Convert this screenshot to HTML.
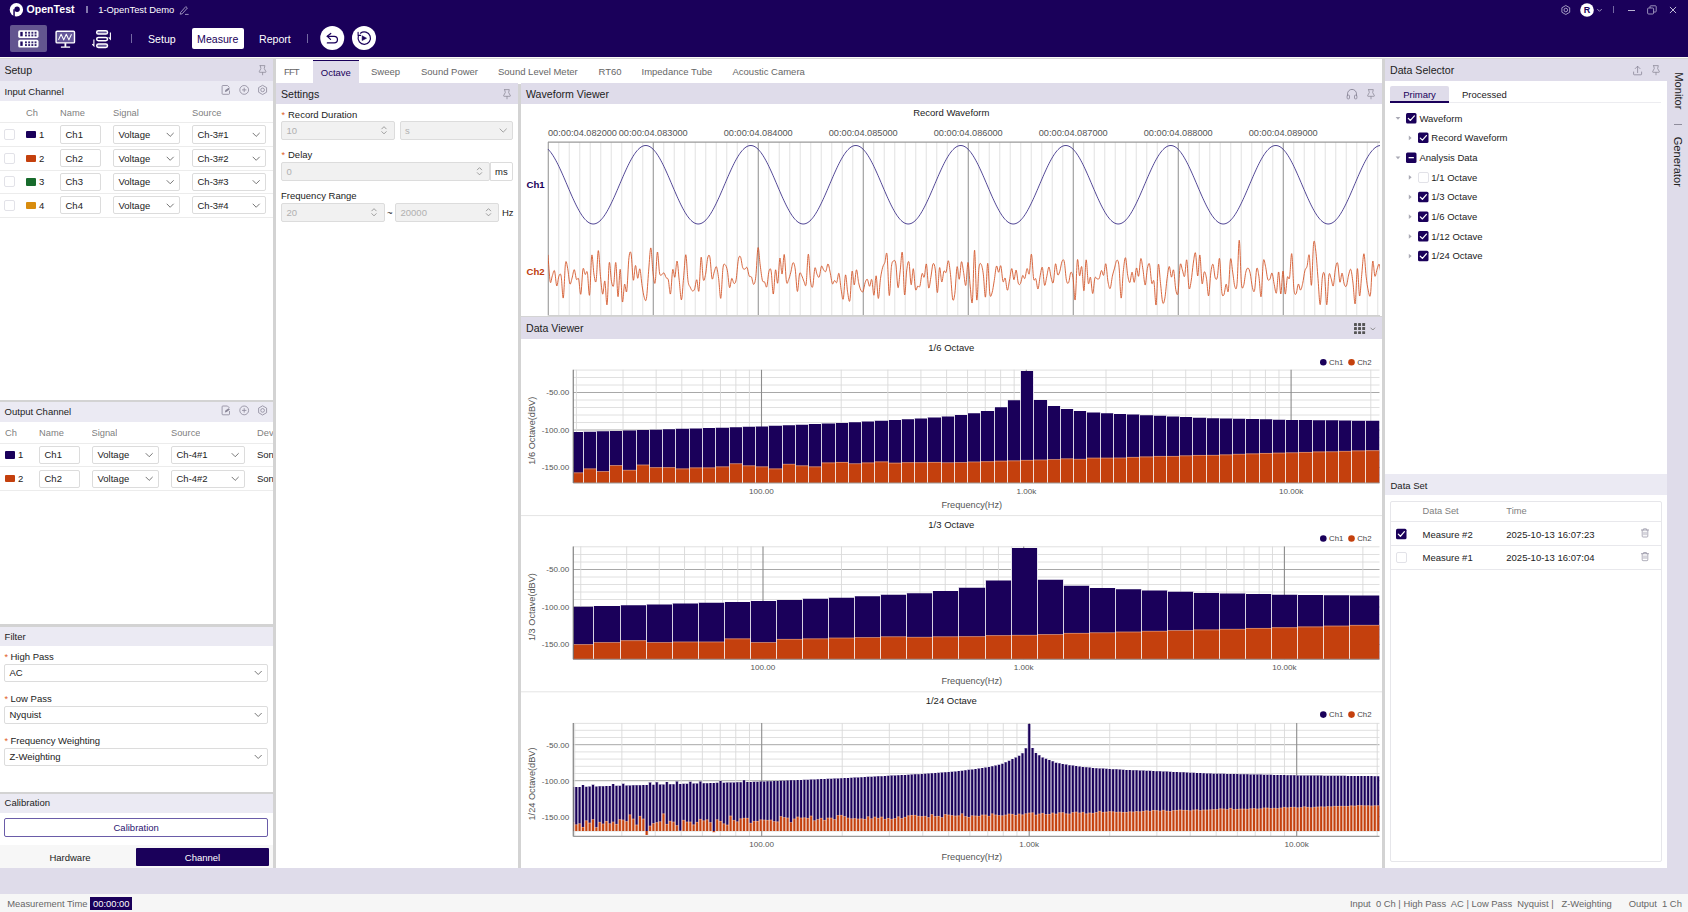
<!DOCTYPE html>
<html><head><meta charset="utf-8"><title>OpenTest</title>
<style>
html,body{margin:0;padding:0;}
body{width:1688px;height:912px;overflow:hidden;position:relative;background:#fff;font-family:"Liberation Sans",sans-serif;}
.a{position:absolute;display:block;}
.t{position:absolute;white-space:nowrap;display:block;}
svg text{font-family:"Liberation Sans",sans-serif;}
</style></head><body>
<div class="a " style="left:0px;top:0px;width:1688px;height:56.8px;background:#1a005a;"></div>
<div class="a " style="left:0px;top:56.8px;width:1688px;height:1.5px;background:#fbfbf6;"></div>
<div class="a " style="left:0px;top:58.3px;width:1688px;height:1px;background:#d6d6d6;"></div>
<div class="a " style="left:0px;top:868px;width:1688px;height:26px;background:#dfdcea;"></div>
<div class="a " style="left:0px;top:894px;width:1688px;height:18px;background:#f6f6f6;"></div>
<div class="a " style="left:273px;top:59px;width:3px;height:809px;background:#d3d3d3;"></div>
<div class="a " style="left:518px;top:83px;width:3px;height:785px;background:#d3d3d3;"></div>
<div class="a " style="left:1382px;top:59px;width:3px;height:809px;background:#d3d3d3;"></div>
<svg class="a" style="left:9px;top:2px;" width="16" height="16" viewBox="0 0 16 16"><circle cx="7.4" cy="7.7" r="6.7" fill="#fff"/><circle cx="8.1" cy="7.3" r="2.7" fill="#1a005a"/><rect x="4.3" y="7.3" width="1.5" height="7.4" fill="#1a005a"/></svg>
<span class="t" style="left:26.50px;top:2.40px;height:14.8px;line-height:14.8px;font-size:10.6px;color:#fff;font-weight:bold;">OpenTest</span>
<div class="a " style="left:86.4px;top:6.3px;width:1.4px;height:7.2px;background:#8378ad;"></div>
<span class="t" style="left:98.20px;top:3.40px;height:13.2px;line-height:13.2px;font-size:9.4px;color:#fff;">1-OpenTest Demo</span>
<svg class="a" style="left:178px;top:4px;" width="12" height="12" viewBox="0 0 12 12"><path d="M2.6 8.4 L7.8 2.6 L9.4 4 L4.2 9.8 L2.2 10.2 Z" fill="none" stroke="#b9b3d2" stroke-width="0.8" stroke-linejoin="round"/><path d="M7 10.4 H10.6" stroke="#b9b3d2" stroke-width="0.8"/></svg>
<svg class="a" style="left:1559px;top:4px;" width="13" height="12" viewBox="0 0 13 12"><g transform="translate(0.8 0)"><path d="M9.90 8.25 L6.00 10.50 L2.10 8.25 L2.10 3.75 L6.00 1.50 L9.90 3.75 Z" fill="none" stroke="#b9b3d2" stroke-width="0.85" stroke-linejoin="round"/><circle cx="6" cy="6" r="1.80" fill="none" stroke="#b9b3d2" stroke-width="0.85"/></g></svg>
<svg class="a" style="left:1579px;top:2px;" width="16" height="16" viewBox="0 0 16 16"><circle cx="8" cy="8" r="6.8" fill="#fff"/></svg>
<span class="t" style="left:1583.85px;top:3.80px;height:12.6px;line-height:12.6px;font-size:9px;color:#1a005a;font-weight:bold;">R</span>
<svg class="a" style="left:1594px;top:5px;" width="11" height="10" viewBox="0 0 11 10"><g transform="translate(0.5 0)"><path d="M3 4.3 L5 6.3 L7 4.3" fill="none" stroke="#b9b3d2" stroke-width="0.8" stroke-linecap="round" stroke-linejoin="round"/></g></svg>
<div class="a " style="left:1612.8px;top:6.3px;width:1.3px;height:7.2px;background:#7468a3;"></div>
<div class="a " style="left:1627.5px;top:9.6px;width:7px;height:0.9px;background:#b9b3d2;"></div>
<svg class="a" style="left:1646px;top:4px;" width="12" height="12" viewBox="0 0 12 12"><rect x="1.6" y="4" width="6" height="6" rx="1" fill="none" stroke="#b9b3d2" stroke-width="0.8"/><path d="M4 4 V2.6 Q4 1.8 4.8 1.8 H9.4 Q10.2 1.8 10.2 2.6 V7.2 Q10.2 8 9.4 8 H7.6" fill="none" stroke="#b9b3d2" stroke-width="0.8"/></svg>
<svg class="a" style="left:1667px;top:4px;" width="12" height="12" viewBox="0 0 12 12"><path d="M3.2 3.2 L8.8 8.8 M8.8 3.2 L3.2 8.8" stroke="#d5d0e6" stroke-width="0.9" stroke-linecap="round"/></svg>
<div class="a " style="left:10px;top:25.4px;width:37px;height:26.6px;background:#63558f;border-radius:2px;"></div>
<svg class="a" style="left:17px;top:29px;" width="23" height="21" viewBox="0 0 23 21"><g transform="translate(0.6 0.4)"><rect x="0.6" y="0.8" width="20.3" height="7.8" rx="1.7" fill="#fff"/><rect x="2.7" y="2.5" width="2.4" height="4.4" fill="#1f0a60"/><rect x="7.4" y="2.4" width="1.9" height="1.9" fill="#36256f"/><rect x="7.4" y="5.1" width="1.9" height="1.9" fill="#36256f"/><rect x="10.6" y="2.4" width="1.9" height="1.9" fill="#36256f"/><rect x="10.6" y="5.1" width="1.9" height="1.9" fill="#36256f"/><rect x="13.8" y="2.4" width="1.9" height="1.9" fill="#36256f"/><rect x="13.8" y="5.1" width="1.9" height="1.9" fill="#36256f"/><rect x="17.0" y="2.4" width="1.9" height="1.9" fill="#36256f"/><rect x="17.0" y="5.1" width="1.9" height="1.9" fill="#36256f"/><rect x="0.6" y="10.4" width="20.3" height="7.8" rx="1.7" fill="#fff"/><rect x="2.7" y="12.1" width="2.4" height="4.4" fill="#1f0a60"/><rect x="7.4" y="12.0" width="1.9" height="1.9" fill="#36256f"/><rect x="7.4" y="14.7" width="1.9" height="1.9" fill="#36256f"/><rect x="10.6" y="12.0" width="1.9" height="1.9" fill="#36256f"/><rect x="10.6" y="14.7" width="1.9" height="1.9" fill="#36256f"/><rect x="13.8" y="12.0" width="1.9" height="1.9" fill="#36256f"/><rect x="13.8" y="14.7" width="1.9" height="1.9" fill="#36256f"/><rect x="17.0" y="12.0" width="1.9" height="1.9" fill="#36256f"/><rect x="17.0" y="14.7" width="1.9" height="1.9" fill="#36256f"/></g></svg>
<svg class="a" style="left:54px;top:29px;" width="23" height="21" viewBox="0 0 23 21"><g transform="translate(0.5 0.5)"><rect x="1.6" y="1.8" width="18.4" height="11.6" rx="1" fill="#65579a" stroke="#fff" stroke-width="1.4"/><path d="M4 10.4 L6.6 4.8 L9.2 10.4 L11.8 4.8 L14.4 10.4 L17 4.8" fill="none" stroke="#fff" stroke-width="1.05" stroke-linejoin="round"/><path d="M10.9 13.6 V17.4" stroke="#fff" stroke-width="1.8"/><path d="M6.4 17.6 H15.6" stroke="#fff" stroke-width="1.3"/></g></svg>
<svg class="a" style="left:91px;top:29px;" width="22" height="21" viewBox="0 0 22 21"><rect x="5.7" y="1.7" width="10.8" height="3.3" rx="1.6" fill="#65579a" stroke="#fff" stroke-width="1.5"/><rect x="5.7" y="8.4" width="10.8" height="3.4" rx="1.7" fill="#1a005a" stroke="#fff" stroke-width="1.5"/><rect x="5.7" y="15.1" width="10.8" height="3.4" rx="1.7" fill="#65579a" stroke="#fff" stroke-width="1.5"/><path d="M19.4 3.4 V10.2 L17.7 8.4 M2.9 10.6 V16.8 L1.3 15.1" fill="none" stroke="#fff" stroke-width="1.1"/></svg>
<div class="a " style="left:131px;top:34px;width:1.3px;height:9px;background:#7468a3;"></div>
<span class="t" style="left:148.00px;top:31.60px;height:14.8px;line-height:14.8px;font-size:10.6px;color:#fff;">Setup</span>
<div class="a " style="left:192px;top:28px;width:51.5px;height:21.4px;background:#fff;border-radius:2px;"></div>
<span class="t" style="left:197.08px;top:31.60px;height:14.8px;line-height:14.8px;font-size:10.6px;color:#1a005a;">Measure</span>
<span class="t" style="left:259.00px;top:31.60px;height:14.8px;line-height:14.8px;font-size:10.6px;color:#fff;">Report</span>
<div class="a " style="left:307px;top:34px;width:1.3px;height:9px;background:#7468a3;"></div>
<svg class="a" style="left:319px;top:25px;" width="26" height="26" viewBox="0 0 26 26"><g transform="translate(0.75 0.4)"><circle cx="12.5" cy="12.5" r="12" fill="#fff"/><path d="M7.5 10.9 H14.4 A3.3 3.3 0 0 1 14.4 17.5 H7.6" fill="none" stroke="#1a005a" stroke-width="1.25" stroke-linecap="round"/><path d="M11 8 L7.5 10.9 L10.8 14" fill="none" stroke="#1a005a" stroke-width="1.25" stroke-linecap="round" stroke-linejoin="round"/></g></svg>
<svg class="a" style="left:351px;top:25px;" width="26" height="26" viewBox="0 0 26 26"><g transform="translate(0.5 0.4)"><circle cx="12.5" cy="12.5" r="12" fill="#fff"/><path d="M8.93 7.81 A6.2 6.2 0 1 1 6.79 10.99" fill="none" stroke="#1a005a" stroke-width="1.2" stroke-linecap="round"/><path d="M6.6 6.8 V10 H9.2" fill="none" stroke="#1a005a" stroke-width="1.1" stroke-linecap="round" stroke-linejoin="round"/><path d="M10.6 10.4 V15.2 L15.1 12.8 Z" fill="#1a005a" stroke="#1a005a" stroke-width="0.5" stroke-linejoin="round"/></g></svg>
<div class="a " style="left:0px;top:59px;width:273px;height:22px;background:#dfdcea;"></div>
<span class="t" style="left:4.40px;top:62.90px;height:14.8px;line-height:14.8px;font-size:10.6px;color:#222;">Setup</span>
<svg class="a" style="left:257px;top:64px;" width="11" height="12" viewBox="0 0 11 12"><g transform="translate(0.6 0)"><path d="M2.7 1.6 H7.3 Q5.5 4.6 8.3 7.5 Q8.7 8.2 8 8.3 H2 Q1.3 8.2 1.7 7.5 Q4.5 4.6 2.7 1.6 Z M5 8.4 V10.8" fill="none" stroke="#92909e" stroke-width="0.85" stroke-linejoin="round" stroke-linecap="round"/></g></svg>
<div class="a " style="left:0px;top:81px;width:273px;height:20px;background:#ebeaf3;"></div>
<span class="t" style="left:4.60px;top:84.65px;height:13.3px;line-height:13.3px;font-size:9.5px;color:#222;">Input Channel</span>
<svg class="a" style="left:220px;top:83px;" width="13" height="13" viewBox="0 0 13 13"><g transform="translate(0.3 0.9)"><path d="M7.2 1.6 H2.6 Q1.8 1.6 1.8 2.4 V9.6 Q1.8 10.4 2.6 10.4 H8.4 Q9.2 10.4 9.2 9.6 V6.6" fill="none" stroke="#8a8798" stroke-width="0.8"/><path d="M7.2 1.6 L9.2 3.6" stroke="#8a8798" stroke-width="0.8"/><path d="M4.6 8 L5 6 L8.4 3.8 L9.6 5 L6.4 7.6 Z" fill="#8a8798"/></g></svg>
<svg class="a" style="left:238px;top:83px;" width="13" height="13" viewBox="0 0 13 13"><g transform="translate(0.2 0.9)"><circle cx="6" cy="6" r="4.4" fill="none" stroke="#8a8798" stroke-width="0.8"/><path d="M6 3.8 V8.2 M3.8 6 H8.2" stroke="#8a8798" stroke-width="0.8"/></g></svg>
<svg class="a" style="left:256px;top:83px;" width="13" height="13" viewBox="0 0 13 13"><g transform="translate(0.6 0.9)"><path d="M9.98 8.30 L6.00 10.60 L2.02 8.30 L2.02 3.70 L6.00 1.40 L9.98 3.70 Z" fill="none" stroke="#8a8798" stroke-width="0.8" stroke-linejoin="round"/><circle cx="6" cy="6" r="1.84" fill="none" stroke="#8a8798" stroke-width="0.8"/></g></svg>
<span class="t" style="left:26.00px;top:107.20px;height:13.0px;line-height:13.0px;font-size:9.3px;color:#808080;">Ch</span>
<span class="t" style="left:60.00px;top:107.20px;height:13.0px;line-height:13.0px;font-size:9.3px;color:#808080;">Name</span>
<span class="t" style="left:113.00px;top:107.20px;height:13.0px;line-height:13.0px;font-size:9.3px;color:#808080;">Signal</span>
<span class="t" style="left:192.00px;top:107.20px;height:13.0px;line-height:13.0px;font-size:9.3px;color:#808080;">Source</span>
<div class="a " style="left:0px;top:122px;width:273px;height:1px;background:#ececec;"></div>
<div class="a " style="left:4.4px;top:128.9px;width:11px;height:11px;background:#fff;border:1px solid #e2e2e8;border-radius:2px;box-sizing:border-box;"></div>
<div class="a " style="left:26px;top:130.7px;width:10px;height:7.6px;background:#1a005a;border-radius:1px;"></div>
<span class="t" style="left:39.00px;top:128.05px;height:13.3px;line-height:13.3px;font-size:9.5px;color:#222;">1</span>
<div class="a " style="left:60px;top:125.4px;width:41px;height:18.2px;background:#fff;border:1px solid #dcdcdc;border-radius:2px;box-sizing:border-box;"></div>
<span class="t" style="left:65.50px;top:128.05px;height:13.3px;line-height:13.3px;font-size:9.5px;color:#222;">Ch1</span>
<div class="a " style="left:113px;top:125.4px;width:67px;height:18.2px;background:#fff;border:1px solid #dcdcdc;border-radius:2px;box-sizing:border-box;"></div>
<span class="t" style="left:118.50px;top:128.05px;height:13.3px;line-height:13.3px;font-size:9.5px;color:#222;">Voltage</span>
<svg class="a" style="left:165px;top:129px;" width="11" height="11" viewBox="0 0 11 11"><g transform="translate(0.2 0.5)"><path d="M1.7999999999999998 3.6999999999999997 L5 6.8999999999999995 L8.2 3.6999999999999997" fill="none" stroke="#666" stroke-width="0.9" stroke-linecap="round" stroke-linejoin="round"/></g></svg>
<div class="a " style="left:192px;top:125.4px;width:74px;height:18.2px;background:#fff;border:1px solid #dcdcdc;border-radius:2px;box-sizing:border-box;"></div>
<span class="t" style="left:197.50px;top:128.05px;height:13.3px;line-height:13.3px;font-size:9.5px;color:#222;">Ch-3#1</span>
<svg class="a" style="left:251px;top:129px;" width="11" height="11" viewBox="0 0 11 11"><g transform="translate(0.2 0.5)"><path d="M1.7999999999999998 3.6999999999999997 L5 6.8999999999999995 L8.2 3.6999999999999997" fill="none" stroke="#666" stroke-width="0.9" stroke-linecap="round" stroke-linejoin="round"/></g></svg>
<div class="a " style="left:0px;top:146.1px;width:273px;height:1px;background:#ececec;"></div>
<div class="a " style="left:4.4px;top:152.8px;width:11px;height:11px;background:#fff;border:1px solid #e2e2e8;border-radius:2px;box-sizing:border-box;"></div>
<div class="a " style="left:26px;top:154.6px;width:10px;height:7.6px;background:#c4400d;border-radius:1px;"></div>
<span class="t" style="left:39.00px;top:151.95px;height:13.3px;line-height:13.3px;font-size:9.5px;color:#222;">2</span>
<div class="a " style="left:60px;top:149.3px;width:41px;height:18.2px;background:#fff;border:1px solid #dcdcdc;border-radius:2px;box-sizing:border-box;"></div>
<span class="t" style="left:65.50px;top:151.95px;height:13.3px;line-height:13.3px;font-size:9.5px;color:#222;">Ch2</span>
<div class="a " style="left:113px;top:149.3px;width:67px;height:18.2px;background:#fff;border:1px solid #dcdcdc;border-radius:2px;box-sizing:border-box;"></div>
<span class="t" style="left:118.50px;top:151.95px;height:13.3px;line-height:13.3px;font-size:9.5px;color:#222;">Voltage</span>
<svg class="a" style="left:165px;top:153px;" width="11" height="11" viewBox="0 0 11 11"><g transform="translate(0.2 0.4)"><path d="M1.7999999999999998 3.6999999999999997 L5 6.8999999999999995 L8.2 3.6999999999999997" fill="none" stroke="#666" stroke-width="0.9" stroke-linecap="round" stroke-linejoin="round"/></g></svg>
<div class="a " style="left:192px;top:149.3px;width:74px;height:18.2px;background:#fff;border:1px solid #dcdcdc;border-radius:2px;box-sizing:border-box;"></div>
<span class="t" style="left:197.50px;top:151.95px;height:13.3px;line-height:13.3px;font-size:9.5px;color:#222;">Ch-3#2</span>
<svg class="a" style="left:251px;top:153px;" width="11" height="11" viewBox="0 0 11 11"><g transform="translate(0.2 0.4)"><path d="M1.7999999999999998 3.6999999999999997 L5 6.8999999999999995 L8.2 3.6999999999999997" fill="none" stroke="#666" stroke-width="0.9" stroke-linecap="round" stroke-linejoin="round"/></g></svg>
<div class="a " style="left:0px;top:170px;width:273px;height:1px;background:#ececec;"></div>
<div class="a " style="left:4.4px;top:176.25px;width:11px;height:11px;background:#fff;border:1px solid #e2e2e8;border-radius:2px;box-sizing:border-box;"></div>
<div class="a " style="left:26px;top:178.05px;width:10px;height:7.6px;background:#176b2c;border-radius:1px;"></div>
<span class="t" style="left:39.00px;top:175.40px;height:13.3px;line-height:13.3px;font-size:9.5px;color:#222;">3</span>
<div class="a " style="left:60px;top:172.75px;width:41px;height:18.2px;background:#fff;border:1px solid #dcdcdc;border-radius:2px;box-sizing:border-box;"></div>
<span class="t" style="left:65.50px;top:175.40px;height:13.3px;line-height:13.3px;font-size:9.5px;color:#222;">Ch3</span>
<div class="a " style="left:113px;top:172.75px;width:67px;height:18.2px;background:#fff;border:1px solid #dcdcdc;border-radius:2px;box-sizing:border-box;"></div>
<span class="t" style="left:118.50px;top:175.40px;height:13.3px;line-height:13.3px;font-size:9.5px;color:#222;">Voltage</span>
<svg class="a" style="left:165px;top:176px;" width="11" height="11" viewBox="0 0 11 11"><g transform="translate(0.2 0.85)"><path d="M1.7999999999999998 3.6999999999999997 L5 6.8999999999999995 L8.2 3.6999999999999997" fill="none" stroke="#666" stroke-width="0.9" stroke-linecap="round" stroke-linejoin="round"/></g></svg>
<div class="a " style="left:192px;top:172.75px;width:74px;height:18.2px;background:#fff;border:1px solid #dcdcdc;border-radius:2px;box-sizing:border-box;"></div>
<span class="t" style="left:197.50px;top:175.40px;height:13.3px;line-height:13.3px;font-size:9.5px;color:#222;">Ch-3#3</span>
<svg class="a" style="left:251px;top:176px;" width="11" height="11" viewBox="0 0 11 11"><g transform="translate(0.2 0.85)"><path d="M1.7999999999999998 3.6999999999999997 L5 6.8999999999999995 L8.2 3.6999999999999997" fill="none" stroke="#666" stroke-width="0.9" stroke-linecap="round" stroke-linejoin="round"/></g></svg>
<div class="a " style="left:0px;top:193.45px;width:273px;height:1px;background:#ececec;"></div>
<div class="a " style="left:4.4px;top:199.75px;width:11px;height:11px;background:#fff;border:1px solid #e2e2e8;border-radius:2px;box-sizing:border-box;"></div>
<div class="a " style="left:26px;top:201.55px;width:10px;height:7.6px;background:#d88c0e;border-radius:1px;"></div>
<span class="t" style="left:39.00px;top:198.90px;height:13.3px;line-height:13.3px;font-size:9.5px;color:#222;">4</span>
<div class="a " style="left:60px;top:196.25px;width:41px;height:18.2px;background:#fff;border:1px solid #dcdcdc;border-radius:2px;box-sizing:border-box;"></div>
<span class="t" style="left:65.50px;top:198.90px;height:13.3px;line-height:13.3px;font-size:9.5px;color:#222;">Ch4</span>
<div class="a " style="left:113px;top:196.25px;width:67px;height:18.2px;background:#fff;border:1px solid #dcdcdc;border-radius:2px;box-sizing:border-box;"></div>
<span class="t" style="left:118.50px;top:198.90px;height:13.3px;line-height:13.3px;font-size:9.5px;color:#222;">Voltage</span>
<svg class="a" style="left:165px;top:200px;" width="11" height="11" viewBox="0 0 11 11"><g transform="translate(0.2 0.35)"><path d="M1.7999999999999998 3.6999999999999997 L5 6.8999999999999995 L8.2 3.6999999999999997" fill="none" stroke="#666" stroke-width="0.9" stroke-linecap="round" stroke-linejoin="round"/></g></svg>
<div class="a " style="left:192px;top:196.25px;width:74px;height:18.2px;background:#fff;border:1px solid #dcdcdc;border-radius:2px;box-sizing:border-box;"></div>
<span class="t" style="left:197.50px;top:198.90px;height:13.3px;line-height:13.3px;font-size:9.5px;color:#222;">Ch-3#4</span>
<svg class="a" style="left:251px;top:200px;" width="11" height="11" viewBox="0 0 11 11"><g transform="translate(0.2 0.35)"><path d="M1.7999999999999998 3.6999999999999997 L5 6.8999999999999995 L8.2 3.6999999999999997" fill="none" stroke="#666" stroke-width="0.9" stroke-linecap="round" stroke-linejoin="round"/></g></svg>
<div class="a " style="left:0px;top:216.95px;width:273px;height:1px;background:#ececec;"></div>
<div class="a " style="left:0px;top:400px;width:273px;height:2px;background:#d3d3d3;"></div>
<div class="a " style="left:0px;top:402px;width:273px;height:20px;background:#ebeaf3;"></div>
<span class="t" style="left:4.60px;top:405.25px;height:13.3px;line-height:13.3px;font-size:9.5px;color:#222;">Output Channel</span>
<svg class="a" style="left:220px;top:404px;" width="13" height="13" viewBox="0 0 13 13"><g transform="translate(0.3 0.4)"><path d="M7.2 1.6 H2.6 Q1.8 1.6 1.8 2.4 V9.6 Q1.8 10.4 2.6 10.4 H8.4 Q9.2 10.4 9.2 9.6 V6.6" fill="none" stroke="#8a8798" stroke-width="0.8"/><path d="M7.2 1.6 L9.2 3.6" stroke="#8a8798" stroke-width="0.8"/><path d="M4.6 8 L5 6 L8.4 3.8 L9.6 5 L6.4 7.6 Z" fill="#8a8798"/></g></svg>
<svg class="a" style="left:238px;top:404px;" width="13" height="13" viewBox="0 0 13 13"><g transform="translate(0.2 0.4)"><circle cx="6" cy="6" r="4.4" fill="none" stroke="#8a8798" stroke-width="0.8"/><path d="M6 3.8 V8.2 M3.8 6 H8.2" stroke="#8a8798" stroke-width="0.8"/></g></svg>
<svg class="a" style="left:256px;top:404px;" width="13" height="13" viewBox="0 0 13 13"><g transform="translate(0.6 0.4)"><path d="M9.98 8.30 L6.00 10.60 L2.02 8.30 L2.02 3.70 L6.00 1.40 L9.98 3.70 Z" fill="none" stroke="#8a8798" stroke-width="0.8" stroke-linejoin="round"/><circle cx="6" cy="6" r="1.84" fill="none" stroke="#8a8798" stroke-width="0.8"/></g></svg>
<span class="t" style="left:5.00px;top:426.80px;height:13.0px;line-height:13.0px;font-size:9.3px;color:#808080;max-width:268px;overflow:hidden;">Ch</span>
<span class="t" style="left:39.00px;top:426.80px;height:13.0px;line-height:13.0px;font-size:9.3px;color:#808080;max-width:234px;overflow:hidden;">Name</span>
<span class="t" style="left:91.50px;top:426.80px;height:13.0px;line-height:13.0px;font-size:9.3px;color:#808080;max-width:181px;overflow:hidden;">Signal</span>
<span class="t" style="left:171.00px;top:426.80px;height:13.0px;line-height:13.0px;font-size:9.3px;color:#808080;max-width:102px;overflow:hidden;">Source</span>
<span class="t" style="left:257.00px;top:426.80px;height:13.0px;line-height:13.0px;font-size:9.3px;color:#808080;max-width:16px;overflow:hidden;">Dev</span>
<div class="a " style="left:0px;top:442.5px;width:273px;height:1px;background:#ececec;"></div>
<div class="a " style="left:5px;top:451.2px;width:10px;height:7.6px;background:#1a005a;border-radius:1px;"></div>
<span class="t" style="left:18.00px;top:448.45px;height:13.3px;line-height:13.3px;font-size:9.5px;color:#222;">1</span>
<div class="a " style="left:39px;top:445.8px;width:41px;height:18px;background:#fff;border:1px solid #dcdcdc;border-radius:2px;box-sizing:border-box;"></div>
<span class="t" style="left:44.50px;top:448.35px;height:13.3px;line-height:13.3px;font-size:9.5px;color:#222;">Ch1</span>
<div class="a " style="left:92px;top:445.8px;width:67px;height:18px;background:#fff;border:1px solid #dcdcdc;border-radius:2px;box-sizing:border-box;"></div>
<span class="t" style="left:97.50px;top:448.35px;height:13.3px;line-height:13.3px;font-size:9.5px;color:#222;">Voltage</span>
<svg class="a" style="left:144px;top:449px;" width="11" height="11" viewBox="0 0 11 11"><g transform="translate(0.2 0.8)"><path d="M1.7999999999999998 3.6999999999999997 L5 6.8999999999999995 L8.2 3.6999999999999997" fill="none" stroke="#666" stroke-width="0.9" stroke-linecap="round" stroke-linejoin="round"/></g></svg>
<div class="a " style="left:171px;top:445.8px;width:74px;height:18px;background:#fff;border:1px solid #dcdcdc;border-radius:2px;box-sizing:border-box;"></div>
<span class="t" style="left:176.50px;top:448.35px;height:13.3px;line-height:13.3px;font-size:9.5px;color:#222;">Ch-4#1</span>
<svg class="a" style="left:230px;top:449px;" width="11" height="11" viewBox="0 0 11 11"><g transform="translate(0.2 0.8)"><path d="M1.7999999999999998 3.6999999999999997 L5 6.8999999999999995 L8.2 3.6999999999999997" fill="none" stroke="#666" stroke-width="0.9" stroke-linecap="round" stroke-linejoin="round"/></g></svg>
<span class="t" style="left:257.00px;top:448.45px;height:13.3px;line-height:13.3px;font-size:9.5px;color:#222;width:16px;overflow:hidden;">Son</span>
<div class="a " style="left:0px;top:466.2px;width:273px;height:1px;background:#ececec;"></div>
<div class="a " style="left:5px;top:474.9px;width:10px;height:7.6px;background:#c4400d;border-radius:1px;"></div>
<span class="t" style="left:18.00px;top:472.15px;height:13.3px;line-height:13.3px;font-size:9.5px;color:#222;">2</span>
<div class="a " style="left:39px;top:469.5px;width:41px;height:18px;background:#fff;border:1px solid #dcdcdc;border-radius:2px;box-sizing:border-box;"></div>
<span class="t" style="left:44.50px;top:472.05px;height:13.3px;line-height:13.3px;font-size:9.5px;color:#222;">Ch2</span>
<div class="a " style="left:92px;top:469.5px;width:67px;height:18px;background:#fff;border:1px solid #dcdcdc;border-radius:2px;box-sizing:border-box;"></div>
<span class="t" style="left:97.50px;top:472.05px;height:13.3px;line-height:13.3px;font-size:9.5px;color:#222;">Voltage</span>
<svg class="a" style="left:144px;top:473px;" width="11" height="11" viewBox="0 0 11 11"><g transform="translate(0.2 0.5)"><path d="M1.7999999999999998 3.6999999999999997 L5 6.8999999999999995 L8.2 3.6999999999999997" fill="none" stroke="#666" stroke-width="0.9" stroke-linecap="round" stroke-linejoin="round"/></g></svg>
<div class="a " style="left:171px;top:469.5px;width:74px;height:18px;background:#fff;border:1px solid #dcdcdc;border-radius:2px;box-sizing:border-box;"></div>
<span class="t" style="left:176.50px;top:472.05px;height:13.3px;line-height:13.3px;font-size:9.5px;color:#222;">Ch-4#2</span>
<svg class="a" style="left:230px;top:473px;" width="11" height="11" viewBox="0 0 11 11"><g transform="translate(0.2 0.5)"><path d="M1.7999999999999998 3.6999999999999997 L5 6.8999999999999995 L8.2 3.6999999999999997" fill="none" stroke="#666" stroke-width="0.9" stroke-linecap="round" stroke-linejoin="round"/></g></svg>
<span class="t" style="left:257.00px;top:472.15px;height:13.3px;line-height:13.3px;font-size:9.5px;color:#222;width:16px;overflow:hidden;">Son</span>
<div class="a " style="left:0px;top:489.9px;width:273px;height:1px;background:#ececec;"></div>
<div class="a " style="left:0px;top:624px;width:273px;height:2.5px;background:#d3d3d3;"></div>
<div class="a " style="left:0px;top:626.5px;width:273px;height:19.7px;background:#ebeaf3;"></div>
<span class="t" style="left:4.60px;top:629.55px;height:13.3px;line-height:13.3px;font-size:9.5px;color:#222;">Filter</span>
<span class="t" style="left:4.60px;top:650.50px;height:12.6px;line-height:12.6px;font-size:9px;color:#e05a1e;">*</span>
<span class="t" style="left:10.50px;top:649.55px;height:13.3px;line-height:13.3px;font-size:9.5px;color:#222;">High Pass</span>
<div class="a " style="left:4px;top:663.6px;width:264px;height:18px;background:#fff;border:1px solid #dcdcdc;border-radius:2px;box-sizing:border-box;"></div>
<span class="t" style="left:9.50px;top:666.15px;height:13.3px;line-height:13.3px;font-size:9.5px;color:#222;">AC</span>
<svg class="a" style="left:253px;top:667px;" width="11" height="11" viewBox="0 0 11 11"><g transform="translate(0.2 0.6)"><path d="M1.7999999999999998 3.6999999999999997 L5 6.8999999999999995 L8.2 3.6999999999999997" fill="none" stroke="#666" stroke-width="0.9" stroke-linecap="round" stroke-linejoin="round"/></g></svg>
<span class="t" style="left:4.60px;top:692.50px;height:12.6px;line-height:12.6px;font-size:9px;color:#e05a1e;">*</span>
<span class="t" style="left:10.50px;top:691.55px;height:13.3px;line-height:13.3px;font-size:9.5px;color:#222;">Low Pass</span>
<div class="a " style="left:4px;top:705.6px;width:264px;height:18px;background:#fff;border:1px solid #dcdcdc;border-radius:2px;box-sizing:border-box;"></div>
<span class="t" style="left:9.50px;top:708.15px;height:13.3px;line-height:13.3px;font-size:9.5px;color:#222;">Nyquist</span>
<svg class="a" style="left:253px;top:709px;" width="11" height="11" viewBox="0 0 11 11"><g transform="translate(0.2 0.6)"><path d="M1.7999999999999998 3.6999999999999997 L5 6.8999999999999995 L8.2 3.6999999999999997" fill="none" stroke="#666" stroke-width="0.9" stroke-linecap="round" stroke-linejoin="round"/></g></svg>
<span class="t" style="left:4.60px;top:734.50px;height:12.6px;line-height:12.6px;font-size:9px;color:#e05a1e;">*</span>
<span class="t" style="left:10.50px;top:733.55px;height:13.3px;line-height:13.3px;font-size:9.5px;color:#222;">Frequency Weighting</span>
<div class="a " style="left:4px;top:747.6px;width:264px;height:18px;background:#fff;border:1px solid #dcdcdc;border-radius:2px;box-sizing:border-box;"></div>
<span class="t" style="left:9.50px;top:750.15px;height:13.3px;line-height:13.3px;font-size:9.5px;color:#222;">Z-Weighting</span>
<svg class="a" style="left:253px;top:751px;" width="11" height="11" viewBox="0 0 11 11"><g transform="translate(0.2 0.6)"><path d="M1.7999999999999998 3.6999999999999997 L5 6.8999999999999995 L8.2 3.6999999999999997" fill="none" stroke="#666" stroke-width="0.9" stroke-linecap="round" stroke-linejoin="round"/></g></svg>
<div class="a " style="left:0px;top:791.5px;width:273px;height:2px;background:#d3d3d3;"></div>
<div class="a " style="left:0px;top:793.5px;width:273px;height:19.5px;background:#ebeaf3;"></div>
<span class="t" style="left:4.60px;top:796.35px;height:13.3px;line-height:13.3px;font-size:9.5px;color:#222;">Calibration</span>
<div class="a " style="left:4px;top:818.4px;width:264px;height:18.6px;background:#fff;border:1px solid #6a5ca8;border-radius:2px;box-sizing:border-box;"></div>
<span class="t" style="left:113.49px;top:821.25px;height:13.3px;line-height:13.3px;font-size:9.5px;color:#2b1570;">Calibration</span>
<div class="a " style="left:0px;top:845px;width:273px;height:23px;background:#f7f7f7;"></div>
<span class="t" style="left:49.41px;top:850.55px;height:13.3px;line-height:13.3px;font-size:9.5px;color:#222;">Hardware</span>
<div class="a " style="left:136px;top:848px;width:133px;height:18.2px;background:#1a005a;border-radius:1px;"></div>
<span class="t" style="left:184.81px;top:850.55px;height:13.3px;line-height:13.3px;font-size:9.5px;color:#fff;">Channel</span>
<div class="a " style="left:276px;top:59px;width:1106px;height:25px;background:#fff;"></div>
<div class="a " style="left:313px;top:60px;width:45.5px;height:23.5px;background:#dfdcea;"></div>
<div class="a " style="left:313px;top:59.6px;width:45.5px;height:1.4px;background:#1a005a;"></div>
<span class="t" style="left:284.00px;top:65.15px;height:13.3px;line-height:13.3px;font-size:9.5px;color:#666;letter-spacing:-0.9px;">FFT</span>
<span class="t" style="left:320.75px;top:65.95px;height:13.3px;line-height:13.3px;font-size:9.5px;color:#1a005a;">Octave</span>
<span class="t" style="left:371.00px;top:65.15px;height:13.3px;line-height:13.3px;font-size:9.5px;color:#666;">Sweep</span>
<span class="t" style="left:421.00px;top:65.15px;height:13.3px;line-height:13.3px;font-size:9.5px;color:#666;">Sound Power</span>
<span class="t" style="left:498.00px;top:65.15px;height:13.3px;line-height:13.3px;font-size:9.5px;color:#666;">Sound Level Meter</span>
<span class="t" style="left:598.50px;top:65.15px;height:13.3px;line-height:13.3px;font-size:9.5px;color:#666;">RT60</span>
<span class="t" style="left:641.50px;top:65.15px;height:13.3px;line-height:13.3px;font-size:9.5px;color:#666;">Impedance Tube</span>
<span class="t" style="left:732.50px;top:65.15px;height:13.3px;line-height:13.3px;font-size:9.5px;color:#666;">Acoustic Camera</span>
<div class="a " style="left:276px;top:83px;width:242px;height:21px;background:#dfdcea;"></div>
<span class="t" style="left:281.00px;top:86.80px;height:14.8px;line-height:14.8px;font-size:10.6px;color:#222;">Settings</span>
<svg class="a" style="left:502px;top:88px;" width="10" height="12" viewBox="0 0 10 12"><path d="M2.7 1.6 H7.3 Q5.5 4.6 8.3 7.5 Q8.7 8.2 8 8.3 H2 Q1.3 8.2 1.7 7.5 Q4.5 4.6 2.7 1.6 Z M5 8.4 V10.8" fill="none" stroke="#92909e" stroke-width="0.85" stroke-linejoin="round" stroke-linecap="round"/></svg>
<span class="t" style="left:281.60px;top:108.50px;height:12.6px;line-height:12.6px;font-size:9px;color:#e05a1e;">*</span>
<span class="t" style="left:288.00px;top:107.55px;height:13.3px;line-height:13.3px;font-size:9.5px;color:#222;">Record Duration</span>
<div class="a " style="left:281px;top:121px;width:113.5px;height:18.5px;background:#f1f1f1;border:1px solid #dcdcdc;border-radius:2px;box-sizing:border-box;"></div>
<span class="t" style="left:286.50px;top:123.80px;height:13.3px;line-height:13.3px;font-size:9.5px;color:#b0b0b0;">10</span>
<svg class="a" style="left:380px;top:124px;" width="8" height="13" viewBox="0 0 8 13"><g transform="translate(0 0.25)"><path d="M1.8 4.6 L4 2.4 L6.2 4.6 M1.8 7.4 L4 9.6 L6.2 7.4" fill="none" stroke="#888" stroke-width="0.8" stroke-linecap="round" stroke-linejoin="round"/></g></svg>
<div class="a " style="left:399.5px;top:121px;width:113.5px;height:18.5px;background:#f1f1f1;border:1px solid #dcdcdc;border-radius:2px;box-sizing:border-box;"></div>
<span class="t" style="left:405.00px;top:123.80px;height:13.3px;line-height:13.3px;font-size:9.5px;color:#b0b0b0;">s</span>
<svg class="a" style="left:498px;top:125px;" width="11" height="11" viewBox="0 0 11 11"><g transform="translate(0.2 0.25)"><path d="M1.7999999999999998 3.6999999999999997 L5 6.8999999999999995 L8.2 3.6999999999999997" fill="none" stroke="#999" stroke-width="0.9" stroke-linecap="round" stroke-linejoin="round"/></g></svg>
<span class="t" style="left:281.60px;top:149.30px;height:12.6px;line-height:12.6px;font-size:9px;color:#e05a1e;">*</span>
<span class="t" style="left:288.00px;top:148.35px;height:13.3px;line-height:13.3px;font-size:9.5px;color:#222;">Delay</span>
<div class="a " style="left:281px;top:162px;width:209px;height:18.5px;background:#f1f1f1;border:1px solid #dcdcdc;border-radius:2px;box-sizing:border-box;"></div>
<span class="t" style="left:286.50px;top:164.80px;height:13.3px;line-height:13.3px;font-size:9.5px;color:#b0b0b0;">0</span>
<svg class="a" style="left:475px;top:165px;" width="9" height="13" viewBox="0 0 9 13"><g transform="translate(0.5 0.25)"><path d="M1.8 4.6 L4 2.4 L6.2 4.6 M1.8 7.4 L4 9.6 L6.2 7.4" fill="none" stroke="#888" stroke-width="0.8" stroke-linecap="round" stroke-linejoin="round"/></g></svg>
<div class="a " style="left:489.5px;top:162px;width:23.5px;height:18.5px;background:#fff;border:1px solid #dcdcdc;border-radius:0 2px 2px 0;box-sizing:border-box;"></div>
<span class="t" style="left:494.97px;top:164.75px;height:13.3px;line-height:13.3px;font-size:9.5px;color:#222;">ms</span>
<span class="t" style="left:281.00px;top:189.35px;height:13.3px;line-height:13.3px;font-size:9.5px;color:#222;">Frequency Range</span>
<div class="a " style="left:281px;top:203px;width:103.5px;height:18.5px;background:#f1f1f1;border:1px solid #dcdcdc;border-radius:2px;box-sizing:border-box;"></div>
<span class="t" style="left:286.50px;top:205.80px;height:13.3px;line-height:13.3px;font-size:9.5px;color:#b0b0b0;">20</span>
<svg class="a" style="left:370px;top:206px;" width="8" height="13" viewBox="0 0 8 13"><g transform="translate(0 0.25)"><path d="M1.8 4.6 L4 2.4 L6.2 4.6 M1.8 7.4 L4 9.6 L6.2 7.4" fill="none" stroke="#888" stroke-width="0.8" stroke-linecap="round" stroke-linejoin="round"/></g></svg>
<span class="t" style="left:387.03px;top:205.95px;height:13.3px;line-height:13.3px;font-size:9.5px;color:#222;">~</span>
<div class="a " style="left:395px;top:203px;width:104px;height:18.5px;background:#f1f1f1;border:1px solid #dcdcdc;border-radius:2px;box-sizing:border-box;"></div>
<span class="t" style="left:400.50px;top:205.80px;height:13.3px;line-height:13.3px;font-size:9.5px;color:#b0b0b0;">20000</span>
<svg class="a" style="left:484px;top:206px;" width="9" height="13" viewBox="0 0 9 13"><g transform="translate(0.5 0.25)"><path d="M1.8 4.6 L4 2.4 L6.2 4.6 M1.8 7.4 L4 9.6 L6.2 7.4" fill="none" stroke="#888" stroke-width="0.8" stroke-linecap="round" stroke-linejoin="round"/></g></svg>
<span class="t" style="left:502.00px;top:205.75px;height:13.3px;line-height:13.3px;font-size:9.5px;color:#222;">Hz</span>
<div class="a " style="left:1385px;top:59px;width:303px;height:22px;background:#dfdcea;"></div>
<div class="a " style="left:1667px;top:81px;width:21px;height:787px;background:#dfdcea;"></div>
<span class="t" style="left:1390.00px;top:62.90px;height:14.8px;line-height:14.8px;font-size:10.6px;color:#222;">Data Selector</span>
<svg class="a" style="left:1631px;top:64px;" width="13" height="13" viewBox="0 0 13 13"><g transform="translate(0.6 0.6)"><path d="M2 7.4 V9.6 Q2 10.2 2.6 10.2 H9.4 Q10 10.2 10 9.6 V7.4 M6 8 V1.8 M3.6 4 L6 1.6 L8.4 4" fill="none" stroke="#8a8798" stroke-width="0.8" stroke-linecap="round" stroke-linejoin="round"/></g></svg>
<svg class="a" style="left:1651px;top:64px;" width="10" height="12" viewBox="0 0 10 12"><path d="M2.7 1.6 H7.3 Q5.5 4.6 8.3 7.5 Q8.7 8.2 8 8.3 H2 Q1.3 8.2 1.7 7.5 Q4.5 4.6 2.7 1.6 Z M5 8.4 V10.8" fill="none" stroke="#92909e" stroke-width="0.85" stroke-linejoin="round" stroke-linecap="round"/></svg>
<div class="a " style="left:1390px;top:86px;width:59px;height:15.6px;background:#dfdcea;border-radius:2px 2px 0 0;"></div>
<div class="a " style="left:1390px;top:101.4px;width:59px;height:1.6px;background:#1a005a;"></div>
<div class="a " style="left:1449px;top:102px;width:212px;height:0.8px;background:#ececf0;"></div>
<span class="t" style="left:1403.14px;top:87.65px;height:13.3px;line-height:13.3px;font-size:9.5px;color:#1a005a;">Primary</span>
<span class="t" style="left:1462.00px;top:87.85px;height:13.3px;line-height:13.3px;font-size:9.5px;color:#222;">Processed</span>
<svg class="a" style="left:1394px;top:114px;" width="8" height="9" viewBox="0 0 8 9"><g transform="translate(0 0.2)"><path d="M1.6 2.8 H6.4 L4 5.6 Z" fill="#a9a9b4"/></g></svg>
<svg class="a" style="left:1406px;top:112px;" width="11" height="12" viewBox="0 0 11 12"><g transform="translate(0 0.9)"><rect x="0" y="0" width="10.5" height="10.5" rx="1.5" fill="#1a005a"/><path d="M2.31 5.46 L4.41 7.56 L8.40 2.94" fill="none" stroke="#fff" stroke-width="1.2" stroke-linecap="round" stroke-linejoin="round"/></g></svg>
<span class="t" style="left:1419.40px;top:111.55px;height:13.3px;line-height:13.3px;font-size:9.5px;color:#222;">Waveform</span>
<svg class="a" style="left:1406px;top:133px;" width="8" height="9" viewBox="0 0 8 9"><g transform="translate(0 0.9)"><path d="M2.8 1.6 V6.4 L5.6 4 Z" fill="#a9a9b4"/></g></svg>
<svg class="a" style="left:1418px;top:132px;" width="11" height="12" viewBox="0 0 11 12"><g transform="translate(0 0.6)"><rect x="0" y="0" width="10.5" height="10.5" rx="1.5" fill="#1a005a"/><path d="M2.31 5.46 L4.41 7.56 L8.40 2.94" fill="none" stroke="#fff" stroke-width="1.2" stroke-linecap="round" stroke-linejoin="round"/></g></svg>
<span class="t" style="left:1431.30px;top:131.25px;height:13.3px;line-height:13.3px;font-size:9.5px;color:#222;">Record Waveform</span>
<svg class="a" style="left:1394px;top:153px;" width="8" height="9" viewBox="0 0 8 9"><g transform="translate(0 0.7)"><path d="M1.6 2.8 H6.4 L4 5.6 Z" fill="#a9a9b4"/></g></svg>
<svg class="a" style="left:1406px;top:152px;" width="11" height="11" viewBox="0 0 11 11"><g transform="translate(0 0.4)"><rect x="0" y="0" width="10.5" height="10.5" rx="1.5" fill="#1a005a"/><path d="M2.62 5.25 H7.88" stroke="#fff" stroke-width="1.3"/></g></svg>
<span class="t" style="left:1419.40px;top:151.05px;height:13.3px;line-height:13.3px;font-size:9.5px;color:#222;">Analysis Data</span>
<svg class="a" style="left:1406px;top:173px;" width="8" height="9" viewBox="0 0 8 9"><g transform="translate(0 0.3)"><path d="M2.8 1.6 V6.4 L5.6 4 Z" fill="#a9a9b4"/></g></svg>
<div class="a " style="left:1418px;top:172px;width:10.5px;height:10.5px;background:#fff;border:1px solid #e2e2e8;border-radius:2px;box-sizing:border-box;"></div>
<span class="t" style="left:1431.30px;top:170.65px;height:13.3px;line-height:13.3px;font-size:9.5px;color:#222;">1/1 Octave</span>
<svg class="a" style="left:1406px;top:193px;" width="8" height="8" viewBox="0 0 8 8"><path d="M2.8 1.6 V6.4 L5.6 4 Z" fill="#a9a9b4"/></svg>
<svg class="a" style="left:1418px;top:191px;" width="11" height="12" viewBox="0 0 11 12"><g transform="translate(0 0.7)"><rect x="0" y="0" width="10.5" height="10.5" rx="1.5" fill="#1a005a"/><path d="M2.31 5.46 L4.41 7.56 L8.40 2.94" fill="none" stroke="#fff" stroke-width="1.2" stroke-linecap="round" stroke-linejoin="round"/></g></svg>
<span class="t" style="left:1431.30px;top:190.35px;height:13.3px;line-height:13.3px;font-size:9.5px;color:#222;">1/3 Octave</span>
<svg class="a" style="left:1406px;top:212px;" width="8" height="9" viewBox="0 0 8 9"><g transform="translate(0 0.7)"><path d="M2.8 1.6 V6.4 L5.6 4 Z" fill="#a9a9b4"/></g></svg>
<svg class="a" style="left:1418px;top:211px;" width="11" height="11" viewBox="0 0 11 11"><g transform="translate(0 0.4)"><rect x="0" y="0" width="10.5" height="10.5" rx="1.5" fill="#1a005a"/><path d="M2.31 5.46 L4.41 7.56 L8.40 2.94" fill="none" stroke="#fff" stroke-width="1.2" stroke-linecap="round" stroke-linejoin="round"/></g></svg>
<span class="t" style="left:1431.30px;top:210.05px;height:13.3px;line-height:13.3px;font-size:9.5px;color:#222;">1/6 Octave</span>
<svg class="a" style="left:1406px;top:232px;" width="8" height="9" viewBox="0 0 8 9"><g transform="translate(0 0.4)"><path d="M2.8 1.6 V6.4 L5.6 4 Z" fill="#a9a9b4"/></g></svg>
<svg class="a" style="left:1418px;top:231px;" width="11" height="11" viewBox="0 0 11 11"><g transform="translate(0 0.1)"><rect x="0" y="0" width="10.5" height="10.5" rx="1.5" fill="#1a005a"/><path d="M2.31 5.46 L4.41 7.56 L8.40 2.94" fill="none" stroke="#fff" stroke-width="1.2" stroke-linecap="round" stroke-linejoin="round"/></g></svg>
<span class="t" style="left:1431.30px;top:229.75px;height:13.3px;line-height:13.3px;font-size:9.5px;color:#222;">1/12 Octave</span>
<svg class="a" style="left:1406px;top:252px;" width="8" height="9" viewBox="0 0 8 9"><g transform="translate(0 0.1)"><path d="M2.8 1.6 V6.4 L5.6 4 Z" fill="#a9a9b4"/></g></svg>
<svg class="a" style="left:1418px;top:250px;" width="11" height="12" viewBox="0 0 11 12"><g transform="translate(0 0.8)"><rect x="0" y="0" width="10.5" height="10.5" rx="1.5" fill="#1a005a"/><path d="M2.31 5.46 L4.41 7.56 L8.40 2.94" fill="none" stroke="#fff" stroke-width="1.2" stroke-linecap="round" stroke-linejoin="round"/></g></svg>
<span class="t" style="left:1431.30px;top:249.45px;height:13.3px;line-height:13.3px;font-size:9.5px;color:#222;">1/24 Octave</span>
<div class="a " style="left:1385px;top:474px;width:282px;height:21px;background:#ebeaf3;"></div>
<span class="t" style="left:1390.50px;top:478.65px;height:13.3px;line-height:13.3px;font-size:9.5px;color:#222;">Data Set</span>
<div class="a " style="left:1390px;top:500.5px;width:271.5px;height:361.5px;background:#fff;border:1px solid #e6e6ea;border-radius:2px;box-sizing:border-box;"></div>
<span class="t" style="left:1422.50px;top:505.30px;height:13.0px;line-height:13.0px;font-size:9.3px;color:#808080;">Data Set</span>
<span class="t" style="left:1506.30px;top:505.30px;height:13.0px;line-height:13.0px;font-size:9.3px;color:#808080;">Time</span>
<div class="a " style="left:1390.5px;top:521.3px;width:270.5px;height:0.9px;background:#e8e8ec;"></div>
<svg class="a" style="left:1396px;top:528px;" width="11" height="12" viewBox="0 0 11 12"><g transform="translate(0 0.7)"><rect x="0" y="0" width="10.5" height="10.5" rx="1.5" fill="#1a005a"/><path d="M2.31 5.46 L4.41 7.56 L8.40 2.94" fill="none" stroke="#fff" stroke-width="1.2" stroke-linecap="round" stroke-linejoin="round"/></g></svg>
<span class="t" style="left:1422.50px;top:527.65px;height:13.3px;line-height:13.3px;font-size:9.5px;color:#222;">Measure #2</span>
<span class="t" style="left:1506.30px;top:527.65px;height:13.3px;line-height:13.3px;font-size:9.5px;color:#222;">2025-10-13 16:07:23</span>
<svg class="a" style="left:1639px;top:526px;" width="12" height="13" viewBox="0 0 12 13"><g transform="translate(0 0.6)"><path d="M2.4 3.4 H9.6 M4.6 3.4 V2.2 H7.4 V3.4 M3.2 3.4 V9.6 Q3.2 10.4 4 10.4 H8 Q8.8 10.4 8.8 9.6 V3.4 M5 5.6 V8.2 M7 5.6 V8.2" fill="none" stroke="#9a98a8" stroke-width="0.8" stroke-linecap="round"/></g></svg>
<div class="a " style="left:1390.5px;top:545.2px;width:270.5px;height:0.9px;background:#e8e8ec;"></div>
<div class="a " style="left:1396px;top:552.4px;width:10.5px;height:10.5px;background:#fff;border:1px solid #e2e2e8;border-radius:2px;box-sizing:border-box;"></div>
<span class="t" style="left:1422.50px;top:551.35px;height:13.3px;line-height:13.3px;font-size:9.5px;color:#222;">Measure #1</span>
<span class="t" style="left:1506.30px;top:551.35px;height:13.3px;line-height:13.3px;font-size:9.5px;color:#222;">2025-10-13 16:07:04</span>
<svg class="a" style="left:1639px;top:550px;" width="12" height="13" viewBox="0 0 12 13"><g transform="translate(0 0.3)"><path d="M2.4 3.4 H9.6 M4.6 3.4 V2.2 H7.4 V3.4 M3.2 3.4 V9.6 Q3.2 10.4 4 10.4 H8 Q8.8 10.4 8.8 9.6 V3.4 M5 5.6 V8.2 M7 5.6 V8.2" fill="none" stroke="#9a98a8" stroke-width="0.8" stroke-linecap="round"/></g></svg>
<div class="a " style="left:1390.5px;top:568.9px;width:270.5px;height:0.9px;background:#e8e8ec;"></div>
<span class="t" style="left:1658.83px;top:83.15px;height:15.7px;line-height:15.7px;font-size:11.2px;color:#222;transform:rotate(90deg);">Monitor</span>
<div class="a " style="left:1673.5px;top:123.6px;width:8px;height:1.3px;background:#8f8d9c;"></div>
<span class="t" style="left:1652.29px;top:154.15px;height:15.7px;line-height:15.7px;font-size:11.2px;color:#222;transform:rotate(90deg);">Generator</span>
<div class="a " style="left:521px;top:83px;width:861px;height:21px;background:#dfdcea;"></div>
<span class="t" style="left:526.00px;top:86.90px;height:14.8px;line-height:14.8px;font-size:10.6px;color:#222;">Waveform Viewer</span>
<svg class="a" style="left:1345px;top:87px;" width="14" height="14" viewBox="0 0 14 14"><g transform="translate(0.5 0.5)"><path d="M2 8.6 V6.4 A4.5 4.5 0 0 1 11 6.4 V8.6" fill="none" stroke="#8a8798" stroke-width="0.9"/><rect x="1.6" y="7.6" width="2.4" height="3.8" rx="0.9" fill="none" stroke="#8a8798" stroke-width="0.8"/><rect x="9" y="7.6" width="2.4" height="3.8" rx="0.9" fill="none" stroke="#8a8798" stroke-width="0.8"/></g></svg>
<svg class="a" style="left:1366px;top:88px;" width="10" height="12" viewBox="0 0 10 12"><path d="M2.7 1.6 H7.3 Q5.5 4.6 8.3 7.5 Q8.7 8.2 8 8.3 H2 Q1.3 8.2 1.7 7.5 Q4.5 4.6 2.7 1.6 Z M5 8.4 V10.8" fill="none" stroke="#92909e" stroke-width="0.85" stroke-linejoin="round" stroke-linecap="round"/></svg>
<div class="a " style="left:521px;top:316px;width:861px;height:1px;background:#d4d4d4;"></div>
<div class="a " style="left:521px;top:317px;width:861px;height:22px;background:#dfdcea;"></div>
<span class="t" style="left:526.00px;top:321.20px;height:14.8px;line-height:14.8px;font-size:10.6px;color:#222;">Data Viewer</span>
<svg class="a" style="left:1354px;top:323px;" width="12" height="12" viewBox="0 0 12 12"><rect x="0.0" y="0.0" width="2.9" height="2.9" rx="0.5" fill="#555"/><rect x="0.0" y="4.1" width="2.9" height="2.9" rx="0.5" fill="#555"/><rect x="0.0" y="8.2" width="2.9" height="2.9" rx="0.5" fill="#555"/><rect x="4.1" y="0.0" width="2.9" height="2.9" rx="0.5" fill="#555"/><rect x="4.1" y="4.1" width="2.9" height="2.9" rx="0.5" fill="#555"/><rect x="4.1" y="8.2" width="2.9" height="2.9" rx="0.5" fill="#555"/><rect x="8.2" y="0.0" width="2.9" height="2.9" rx="0.5" fill="#555"/><rect x="8.2" y="4.1" width="2.9" height="2.9" rx="0.5" fill="#555"/><rect x="8.2" y="8.2" width="2.9" height="2.9" rx="0.5" fill="#555"/></svg>
<svg class="a" style="left:1367px;top:323px;" width="11" height="11" viewBox="0 0 11 11"><g transform="translate(0.8 0.7)"><path d="M3 4.3 L5 6.3 L7 4.3" fill="none" stroke="#777" stroke-width="0.8" stroke-linecap="round" stroke-linejoin="round"/></g></svg>
<svg class="a" style="left:521px;top:104px" width="861" height="764" viewBox="521 104 861 764"><text x="951.3" y="116.4" font-size="9.5" fill="#222" text-anchor="middle">Record Waveform</text><path d="M548.25 142.00 L548.25 315.50" stroke="#8f8f8f" stroke-width="1"/><path d="M558.75 142.00 L558.75 315.50" stroke="#dedede" stroke-width="0.9"/><path d="M569.25 142.00 L569.25 315.50" stroke="#dedede" stroke-width="0.9"/><path d="M579.75 142.00 L579.75 315.50" stroke="#dedede" stroke-width="0.9"/><path d="M590.25 142.00 L590.25 315.50" stroke="#dedede" stroke-width="0.9"/><path d="M600.75 142.00 L600.75 315.50" stroke="#dedede" stroke-width="0.9"/><path d="M611.25 142.00 L611.25 315.50" stroke="#dedede" stroke-width="0.9"/><path d="M621.75 142.00 L621.75 315.50" stroke="#dedede" stroke-width="0.9"/><path d="M632.25 142.00 L632.25 315.50" stroke="#dedede" stroke-width="0.9"/><path d="M642.75 142.00 L642.75 315.50" stroke="#dedede" stroke-width="0.9"/><path d="M653.25 142.00 L653.25 315.50" stroke="#8f8f8f" stroke-width="1"/><path d="M663.75 142.00 L663.75 315.50" stroke="#dedede" stroke-width="0.9"/><path d="M674.25 142.00 L674.25 315.50" stroke="#dedede" stroke-width="0.9"/><path d="M684.75 142.00 L684.75 315.50" stroke="#dedede" stroke-width="0.9"/><path d="M695.25 142.00 L695.25 315.50" stroke="#dedede" stroke-width="0.9"/><path d="M705.75 142.00 L705.75 315.50" stroke="#dedede" stroke-width="0.9"/><path d="M716.25 142.00 L716.25 315.50" stroke="#dedede" stroke-width="0.9"/><path d="M726.75 142.00 L726.75 315.50" stroke="#dedede" stroke-width="0.9"/><path d="M737.25 142.00 L737.25 315.50" stroke="#dedede" stroke-width="0.9"/><path d="M747.75 142.00 L747.75 315.50" stroke="#dedede" stroke-width="0.9"/><path d="M758.25 142.00 L758.25 315.50" stroke="#8f8f8f" stroke-width="1"/><path d="M768.75 142.00 L768.75 315.50" stroke="#dedede" stroke-width="0.9"/><path d="M779.25 142.00 L779.25 315.50" stroke="#dedede" stroke-width="0.9"/><path d="M789.75 142.00 L789.75 315.50" stroke="#dedede" stroke-width="0.9"/><path d="M800.25 142.00 L800.25 315.50" stroke="#dedede" stroke-width="0.9"/><path d="M810.75 142.00 L810.75 315.50" stroke="#dedede" stroke-width="0.9"/><path d="M821.25 142.00 L821.25 315.50" stroke="#dedede" stroke-width="0.9"/><path d="M831.75 142.00 L831.75 315.50" stroke="#dedede" stroke-width="0.9"/><path d="M842.25 142.00 L842.25 315.50" stroke="#dedede" stroke-width="0.9"/><path d="M852.75 142.00 L852.75 315.50" stroke="#dedede" stroke-width="0.9"/><path d="M863.25 142.00 L863.25 315.50" stroke="#8f8f8f" stroke-width="1"/><path d="M873.75 142.00 L873.75 315.50" stroke="#dedede" stroke-width="0.9"/><path d="M884.25 142.00 L884.25 315.50" stroke="#dedede" stroke-width="0.9"/><path d="M894.75 142.00 L894.75 315.50" stroke="#dedede" stroke-width="0.9"/><path d="M905.25 142.00 L905.25 315.50" stroke="#dedede" stroke-width="0.9"/><path d="M915.75 142.00 L915.75 315.50" stroke="#dedede" stroke-width="0.9"/><path d="M926.25 142.00 L926.25 315.50" stroke="#dedede" stroke-width="0.9"/><path d="M936.75 142.00 L936.75 315.50" stroke="#dedede" stroke-width="0.9"/><path d="M947.25 142.00 L947.25 315.50" stroke="#dedede" stroke-width="0.9"/><path d="M957.75 142.00 L957.75 315.50" stroke="#dedede" stroke-width="0.9"/><path d="M968.25 142.00 L968.25 315.50" stroke="#8f8f8f" stroke-width="1"/><path d="M978.75 142.00 L978.75 315.50" stroke="#dedede" stroke-width="0.9"/><path d="M989.25 142.00 L989.25 315.50" stroke="#dedede" stroke-width="0.9"/><path d="M999.75 142.00 L999.75 315.50" stroke="#dedede" stroke-width="0.9"/><path d="M1010.25 142.00 L1010.25 315.50" stroke="#dedede" stroke-width="0.9"/><path d="M1020.75 142.00 L1020.75 315.50" stroke="#dedede" stroke-width="0.9"/><path d="M1031.25 142.00 L1031.25 315.50" stroke="#dedede" stroke-width="0.9"/><path d="M1041.75 142.00 L1041.75 315.50" stroke="#dedede" stroke-width="0.9"/><path d="M1052.25 142.00 L1052.25 315.50" stroke="#dedede" stroke-width="0.9"/><path d="M1062.75 142.00 L1062.75 315.50" stroke="#dedede" stroke-width="0.9"/><path d="M1073.25 142.00 L1073.25 315.50" stroke="#8f8f8f" stroke-width="1"/><path d="M1083.75 142.00 L1083.75 315.50" stroke="#dedede" stroke-width="0.9"/><path d="M1094.25 142.00 L1094.25 315.50" stroke="#dedede" stroke-width="0.9"/><path d="M1104.75 142.00 L1104.75 315.50" stroke="#dedede" stroke-width="0.9"/><path d="M1115.25 142.00 L1115.25 315.50" stroke="#dedede" stroke-width="0.9"/><path d="M1125.75 142.00 L1125.75 315.50" stroke="#dedede" stroke-width="0.9"/><path d="M1136.25 142.00 L1136.25 315.50" stroke="#dedede" stroke-width="0.9"/><path d="M1146.75 142.00 L1146.75 315.50" stroke="#dedede" stroke-width="0.9"/><path d="M1157.25 142.00 L1157.25 315.50" stroke="#dedede" stroke-width="0.9"/><path d="M1167.75 142.00 L1167.75 315.50" stroke="#dedede" stroke-width="0.9"/><path d="M1178.25 142.00 L1178.25 315.50" stroke="#8f8f8f" stroke-width="1"/><path d="M1188.75 142.00 L1188.75 315.50" stroke="#dedede" stroke-width="0.9"/><path d="M1199.25 142.00 L1199.25 315.50" stroke="#dedede" stroke-width="0.9"/><path d="M1209.75 142.00 L1209.75 315.50" stroke="#dedede" stroke-width="0.9"/><path d="M1220.25 142.00 L1220.25 315.50" stroke="#dedede" stroke-width="0.9"/><path d="M1230.75 142.00 L1230.75 315.50" stroke="#dedede" stroke-width="0.9"/><path d="M1241.25 142.00 L1241.25 315.50" stroke="#dedede" stroke-width="0.9"/><path d="M1251.75 142.00 L1251.75 315.50" stroke="#dedede" stroke-width="0.9"/><path d="M1262.25 142.00 L1262.25 315.50" stroke="#dedede" stroke-width="0.9"/><path d="M1272.75 142.00 L1272.75 315.50" stroke="#dedede" stroke-width="0.9"/><path d="M1283.25 142.00 L1283.25 315.50" stroke="#8f8f8f" stroke-width="1"/><path d="M1293.75 142.00 L1293.75 315.50" stroke="#dedede" stroke-width="0.9"/><path d="M1304.25 142.00 L1304.25 315.50" stroke="#dedede" stroke-width="0.9"/><path d="M1314.75 142.00 L1314.75 315.50" stroke="#dedede" stroke-width="0.9"/><path d="M1325.25 142.00 L1325.25 315.50" stroke="#dedede" stroke-width="0.9"/><path d="M1335.75 142.00 L1335.75 315.50" stroke="#dedede" stroke-width="0.9"/><path d="M1346.25 142.00 L1346.25 315.50" stroke="#dedede" stroke-width="0.9"/><path d="M1356.75 142.00 L1356.75 315.50" stroke="#dedede" stroke-width="0.9"/><path d="M1367.25 142.00 L1367.25 315.50" stroke="#dedede" stroke-width="0.9"/><path d="M1377.75 142.00 L1377.75 315.50" stroke="#dedede" stroke-width="0.9"/><path d="M548.00 142.20 L1380.00 142.20" stroke="#9a9a9a" stroke-width="1.2"/><path d="M548.00 315.50 L1380.00 315.50" stroke="#d0d0d0" stroke-width="1"/><text x="548.00" y="136.20" font-size="9.2" fill="#555" text-anchor="start">00:00:04.082000</text><text x="653.25" y="136.20" font-size="9.2" fill="#555" text-anchor="middle">00:00:04.083000</text><text x="758.25" y="136.20" font-size="9.2" fill="#555" text-anchor="middle">00:00:04.084000</text><text x="863.25" y="136.20" font-size="9.2" fill="#555" text-anchor="middle">00:00:04.085000</text><text x="968.25" y="136.20" font-size="9.2" fill="#555" text-anchor="middle">00:00:04.086000</text><text x="1073.25" y="136.20" font-size="9.2" fill="#555" text-anchor="middle">00:00:04.087000</text><text x="1178.25" y="136.20" font-size="9.2" fill="#555" text-anchor="middle">00:00:04.088000</text><text x="1283.25" y="136.20" font-size="9.2" fill="#555" text-anchor="middle">00:00:04.089000</text><text x="526.50" y="188.20" font-size="9.6" fill="#1a005a" text-anchor="start" font-weight="bold">Ch1</text><text x="526.50" y="275.00" font-size="9.6" fill="#bd3a0c" text-anchor="start" font-weight="bold">Ch2</text><path d="M548.0 149.14 L549.0 150.19 L550.0 151.36 L551.0 152.65 L552.0 154.06 L553.0 155.58 L554.0 157.20 L555.0 158.93 L556.0 160.74 L557.0 162.64 L558.0 164.62 L559.0 166.67 L560.0 168.79 L561.0 170.96 L562.0 173.18 L563.0 175.44 L564.0 177.74 L565.0 180.06 L566.0 182.40 L567.0 184.75 L568.0 187.10 L569.0 189.44 L570.0 191.76 L571.0 194.06 L572.0 196.32 L573.0 198.54 L574.0 200.71 L575.0 202.83 L576.0 204.88 L577.0 206.86 L578.0 208.76 L579.0 210.57 L580.0 212.30 L581.0 213.92 L582.0 215.44 L583.0 216.85 L584.0 218.14 L585.0 219.31 L586.0 220.36 L587.0 221.29 L588.0 222.08 L589.0 222.74 L590.0 223.26 L591.0 223.64 L592.0 223.89 L593.0 224.00 L594.0 223.96 L595.0 223.78 L596.0 223.47 L597.0 223.02 L598.0 222.43 L599.0 221.70 L600.0 220.84 L601.0 219.85 L602.0 218.74 L603.0 217.51 L604.0 216.16 L605.0 214.69 L606.0 213.12 L607.0 211.45 L608.0 209.68 L609.0 207.82 L610.0 205.88 L611.0 203.86 L612.0 201.78 L613.0 199.63 L614.0 197.44 L615.0 195.19 L616.0 192.91 L617.0 190.60 L618.0 188.27 L619.0 185.92 L620.0 183.58 L621.0 181.23 L622.0 178.90 L623.0 176.59 L624.0 174.31 L625.0 172.06 L626.0 169.87 L627.0 167.72 L628.0 165.64 L629.0 163.62 L630.0 161.68 L631.0 159.82 L632.0 158.05 L633.0 156.38 L634.0 154.81 L635.0 153.34 L636.0 151.99 L637.0 150.76 L638.0 149.65 L639.0 148.66 L640.0 147.80 L641.0 147.07 L642.0 146.48 L643.0 146.03 L644.0 145.72 L645.0 145.54 L646.0 145.50 L647.0 145.61 L648.0 145.86 L649.0 146.24 L650.0 146.76 L651.0 147.42 L652.0 148.21 L653.0 149.14 L654.0 150.19 L655.0 151.36 L656.0 152.65 L657.0 154.06 L658.0 155.58 L659.0 157.20 L660.0 158.93 L661.0 160.74 L662.0 162.64 L663.0 164.62 L664.0 166.67 L665.0 168.79 L666.0 170.96 L667.0 173.18 L668.0 175.44 L669.0 177.74 L670.0 180.06 L671.0 182.40 L672.0 184.75 L673.0 187.10 L674.0 189.44 L675.0 191.76 L676.0 194.06 L677.0 196.32 L678.0 198.54 L679.0 200.71 L680.0 202.83 L681.0 204.88 L682.0 206.86 L683.0 208.76 L684.0 210.57 L685.0 212.30 L686.0 213.92 L687.0 215.44 L688.0 216.85 L689.0 218.14 L690.0 219.31 L691.0 220.36 L692.0 221.29 L693.0 222.08 L694.0 222.74 L695.0 223.26 L696.0 223.64 L697.0 223.89 L698.0 224.00 L699.0 223.96 L700.0 223.78 L701.0 223.47 L702.0 223.02 L703.0 222.43 L704.0 221.70 L705.0 220.84 L706.0 219.85 L707.0 218.74 L708.0 217.51 L709.0 216.16 L710.0 214.69 L711.0 213.12 L712.0 211.45 L713.0 209.68 L714.0 207.82 L715.0 205.88 L716.0 203.86 L717.0 201.78 L718.0 199.63 L719.0 197.44 L720.0 195.19 L721.0 192.91 L722.0 190.60 L723.0 188.27 L724.0 185.92 L725.0 183.58 L726.0 181.23 L727.0 178.90 L728.0 176.59 L729.0 174.31 L730.0 172.06 L731.0 169.87 L732.0 167.72 L733.0 165.64 L734.0 163.62 L735.0 161.68 L736.0 159.82 L737.0 158.05 L738.0 156.38 L739.0 154.81 L740.0 153.34 L741.0 151.99 L742.0 150.76 L743.0 149.65 L744.0 148.66 L745.0 147.80 L746.0 147.07 L747.0 146.48 L748.0 146.03 L749.0 145.72 L750.0 145.54 L751.0 145.50 L752.0 145.61 L753.0 145.86 L754.0 146.24 L755.0 146.76 L756.0 147.42 L757.0 148.21 L758.0 149.14 L759.0 150.19 L760.0 151.36 L761.0 152.65 L762.0 154.06 L763.0 155.58 L764.0 157.20 L765.0 158.93 L766.0 160.74 L767.0 162.64 L768.0 164.62 L769.0 166.67 L770.0 168.79 L771.0 170.96 L772.0 173.18 L773.0 175.44 L774.0 177.74 L775.0 180.06 L776.0 182.40 L777.0 184.75 L778.0 187.10 L779.0 189.44 L780.0 191.76 L781.0 194.06 L782.0 196.32 L783.0 198.54 L784.0 200.71 L785.0 202.83 L786.0 204.88 L787.0 206.86 L788.0 208.76 L789.0 210.57 L790.0 212.30 L791.0 213.92 L792.0 215.44 L793.0 216.85 L794.0 218.14 L795.0 219.31 L796.0 220.36 L797.0 221.29 L798.0 222.08 L799.0 222.74 L800.0 223.26 L801.0 223.64 L802.0 223.89 L803.0 224.00 L804.0 223.96 L805.0 223.78 L806.0 223.47 L807.0 223.02 L808.0 222.43 L809.0 221.70 L810.0 220.84 L811.0 219.85 L812.0 218.74 L813.0 217.51 L814.0 216.16 L815.0 214.69 L816.0 213.12 L817.0 211.45 L818.0 209.68 L819.0 207.82 L820.0 205.88 L821.0 203.86 L822.0 201.78 L823.0 199.63 L824.0 197.44 L825.0 195.19 L826.0 192.91 L827.0 190.60 L828.0 188.27 L829.0 185.92 L830.0 183.58 L831.0 181.23 L832.0 178.90 L833.0 176.59 L834.0 174.31 L835.0 172.06 L836.0 169.87 L837.0 167.72 L838.0 165.64 L839.0 163.62 L840.0 161.68 L841.0 159.82 L842.0 158.05 L843.0 156.38 L844.0 154.81 L845.0 153.34 L846.0 151.99 L847.0 150.76 L848.0 149.65 L849.0 148.66 L850.0 147.80 L851.0 147.07 L852.0 146.48 L853.0 146.03 L854.0 145.72 L855.0 145.54 L856.0 145.50 L857.0 145.61 L858.0 145.86 L859.0 146.24 L860.0 146.76 L861.0 147.42 L862.0 148.21 L863.0 149.14 L864.0 150.19 L865.0 151.36 L866.0 152.65 L867.0 154.06 L868.0 155.58 L869.0 157.20 L870.0 158.93 L871.0 160.74 L872.0 162.64 L873.0 164.62 L874.0 166.67 L875.0 168.79 L876.0 170.96 L877.0 173.18 L878.0 175.44 L879.0 177.74 L880.0 180.06 L881.0 182.40 L882.0 184.75 L883.0 187.10 L884.0 189.44 L885.0 191.76 L886.0 194.06 L887.0 196.32 L888.0 198.54 L889.0 200.71 L890.0 202.83 L891.0 204.88 L892.0 206.86 L893.0 208.76 L894.0 210.57 L895.0 212.30 L896.0 213.92 L897.0 215.44 L898.0 216.85 L899.0 218.14 L900.0 219.31 L901.0 220.36 L902.0 221.29 L903.0 222.08 L904.0 222.74 L905.0 223.26 L906.0 223.64 L907.0 223.89 L908.0 224.00 L909.0 223.96 L910.0 223.78 L911.0 223.47 L912.0 223.02 L913.0 222.43 L914.0 221.70 L915.0 220.84 L916.0 219.85 L917.0 218.74 L918.0 217.51 L919.0 216.16 L920.0 214.69 L921.0 213.12 L922.0 211.45 L923.0 209.68 L924.0 207.82 L925.0 205.88 L926.0 203.86 L927.0 201.78 L928.0 199.63 L929.0 197.44 L930.0 195.19 L931.0 192.91 L932.0 190.60 L933.0 188.27 L934.0 185.92 L935.0 183.58 L936.0 181.23 L937.0 178.90 L938.0 176.59 L939.0 174.31 L940.0 172.06 L941.0 169.87 L942.0 167.72 L943.0 165.64 L944.0 163.62 L945.0 161.68 L946.0 159.82 L947.0 158.05 L948.0 156.38 L949.0 154.81 L950.0 153.34 L951.0 151.99 L952.0 150.76 L953.0 149.65 L954.0 148.66 L955.0 147.80 L956.0 147.07 L957.0 146.48 L958.0 146.03 L959.0 145.72 L960.0 145.54 L961.0 145.50 L962.0 145.61 L963.0 145.86 L964.0 146.24 L965.0 146.76 L966.0 147.42 L967.0 148.21 L968.0 149.14 L969.0 150.19 L970.0 151.36 L971.0 152.65 L972.0 154.06 L973.0 155.58 L974.0 157.20 L975.0 158.93 L976.0 160.74 L977.0 162.64 L978.0 164.62 L979.0 166.67 L980.0 168.79 L981.0 170.96 L982.0 173.18 L983.0 175.44 L984.0 177.74 L985.0 180.06 L986.0 182.40 L987.0 184.75 L988.0 187.10 L989.0 189.44 L990.0 191.76 L991.0 194.06 L992.0 196.32 L993.0 198.54 L994.0 200.71 L995.0 202.83 L996.0 204.88 L997.0 206.86 L998.0 208.76 L999.0 210.57 L1000.0 212.30 L1001.0 213.92 L1002.0 215.44 L1003.0 216.85 L1004.0 218.14 L1005.0 219.31 L1006.0 220.36 L1007.0 221.29 L1008.0 222.08 L1009.0 222.74 L1010.0 223.26 L1011.0 223.64 L1012.0 223.89 L1013.0 224.00 L1014.0 223.96 L1015.0 223.78 L1016.0 223.47 L1017.0 223.02 L1018.0 222.43 L1019.0 221.70 L1020.0 220.84 L1021.0 219.85 L1022.0 218.74 L1023.0 217.51 L1024.0 216.16 L1025.0 214.69 L1026.0 213.12 L1027.0 211.45 L1028.0 209.68 L1029.0 207.82 L1030.0 205.88 L1031.0 203.86 L1032.0 201.78 L1033.0 199.63 L1034.0 197.44 L1035.0 195.19 L1036.0 192.91 L1037.0 190.60 L1038.0 188.27 L1039.0 185.92 L1040.0 183.58 L1041.0 181.23 L1042.0 178.90 L1043.0 176.59 L1044.0 174.31 L1045.0 172.06 L1046.0 169.87 L1047.0 167.72 L1048.0 165.64 L1049.0 163.62 L1050.0 161.68 L1051.0 159.82 L1052.0 158.05 L1053.0 156.38 L1054.0 154.81 L1055.0 153.34 L1056.0 151.99 L1057.0 150.76 L1058.0 149.65 L1059.0 148.66 L1060.0 147.80 L1061.0 147.07 L1062.0 146.48 L1063.0 146.03 L1064.0 145.72 L1065.0 145.54 L1066.0 145.50 L1067.0 145.61 L1068.0 145.86 L1069.0 146.24 L1070.0 146.76 L1071.0 147.42 L1072.0 148.21 L1073.0 149.14 L1074.0 150.19 L1075.0 151.36 L1076.0 152.65 L1077.0 154.06 L1078.0 155.58 L1079.0 157.20 L1080.0 158.93 L1081.0 160.74 L1082.0 162.64 L1083.0 164.62 L1084.0 166.67 L1085.0 168.79 L1086.0 170.96 L1087.0 173.18 L1088.0 175.44 L1089.0 177.74 L1090.0 180.06 L1091.0 182.40 L1092.0 184.75 L1093.0 187.10 L1094.0 189.44 L1095.0 191.76 L1096.0 194.06 L1097.0 196.32 L1098.0 198.54 L1099.0 200.71 L1100.0 202.83 L1101.0 204.88 L1102.0 206.86 L1103.0 208.76 L1104.0 210.57 L1105.0 212.30 L1106.0 213.92 L1107.0 215.44 L1108.0 216.85 L1109.0 218.14 L1110.0 219.31 L1111.0 220.36 L1112.0 221.29 L1113.0 222.08 L1114.0 222.74 L1115.0 223.26 L1116.0 223.64 L1117.0 223.89 L1118.0 224.00 L1119.0 223.96 L1120.0 223.78 L1121.0 223.47 L1122.0 223.02 L1123.0 222.43 L1124.0 221.70 L1125.0 220.84 L1126.0 219.85 L1127.0 218.74 L1128.0 217.51 L1129.0 216.16 L1130.0 214.69 L1131.0 213.12 L1132.0 211.45 L1133.0 209.68 L1134.0 207.82 L1135.0 205.88 L1136.0 203.86 L1137.0 201.78 L1138.0 199.63 L1139.0 197.44 L1140.0 195.19 L1141.0 192.91 L1142.0 190.60 L1143.0 188.27 L1144.0 185.92 L1145.0 183.58 L1146.0 181.23 L1147.0 178.90 L1148.0 176.59 L1149.0 174.31 L1150.0 172.06 L1151.0 169.87 L1152.0 167.72 L1153.0 165.64 L1154.0 163.62 L1155.0 161.68 L1156.0 159.82 L1157.0 158.05 L1158.0 156.38 L1159.0 154.81 L1160.0 153.34 L1161.0 151.99 L1162.0 150.76 L1163.0 149.65 L1164.0 148.66 L1165.0 147.80 L1166.0 147.07 L1167.0 146.48 L1168.0 146.03 L1169.0 145.72 L1170.0 145.54 L1171.0 145.50 L1172.0 145.61 L1173.0 145.86 L1174.0 146.24 L1175.0 146.76 L1176.0 147.42 L1177.0 148.21 L1178.0 149.14 L1179.0 150.19 L1180.0 151.36 L1181.0 152.65 L1182.0 154.06 L1183.0 155.58 L1184.0 157.20 L1185.0 158.93 L1186.0 160.74 L1187.0 162.64 L1188.0 164.62 L1189.0 166.67 L1190.0 168.79 L1191.0 170.96 L1192.0 173.18 L1193.0 175.44 L1194.0 177.74 L1195.0 180.06 L1196.0 182.40 L1197.0 184.75 L1198.0 187.10 L1199.0 189.44 L1200.0 191.76 L1201.0 194.06 L1202.0 196.32 L1203.0 198.54 L1204.0 200.71 L1205.0 202.83 L1206.0 204.88 L1207.0 206.86 L1208.0 208.76 L1209.0 210.57 L1210.0 212.30 L1211.0 213.92 L1212.0 215.44 L1213.0 216.85 L1214.0 218.14 L1215.0 219.31 L1216.0 220.36 L1217.0 221.29 L1218.0 222.08 L1219.0 222.74 L1220.0 223.26 L1221.0 223.64 L1222.0 223.89 L1223.0 224.00 L1224.0 223.96 L1225.0 223.78 L1226.0 223.47 L1227.0 223.02 L1228.0 222.43 L1229.0 221.70 L1230.0 220.84 L1231.0 219.85 L1232.0 218.74 L1233.0 217.51 L1234.0 216.16 L1235.0 214.69 L1236.0 213.12 L1237.0 211.45 L1238.0 209.68 L1239.0 207.82 L1240.0 205.88 L1241.0 203.86 L1242.0 201.78 L1243.0 199.63 L1244.0 197.44 L1245.0 195.19 L1246.0 192.91 L1247.0 190.60 L1248.0 188.27 L1249.0 185.92 L1250.0 183.58 L1251.0 181.23 L1252.0 178.90 L1253.0 176.59 L1254.0 174.31 L1255.0 172.06 L1256.0 169.87 L1257.0 167.72 L1258.0 165.64 L1259.0 163.62 L1260.0 161.68 L1261.0 159.82 L1262.0 158.05 L1263.0 156.38 L1264.0 154.81 L1265.0 153.34 L1266.0 151.99 L1267.0 150.76 L1268.0 149.65 L1269.0 148.66 L1270.0 147.80 L1271.0 147.07 L1272.0 146.48 L1273.0 146.03 L1274.0 145.72 L1275.0 145.54 L1276.0 145.50 L1277.0 145.61 L1278.0 145.86 L1279.0 146.24 L1280.0 146.76 L1281.0 147.42 L1282.0 148.21 L1283.0 149.14 L1284.0 150.19 L1285.0 151.36 L1286.0 152.65 L1287.0 154.06 L1288.0 155.58 L1289.0 157.20 L1290.0 158.93 L1291.0 160.74 L1292.0 162.64 L1293.0 164.62 L1294.0 166.67 L1295.0 168.79 L1296.0 170.96 L1297.0 173.18 L1298.0 175.44 L1299.0 177.74 L1300.0 180.06 L1301.0 182.40 L1302.0 184.75 L1303.0 187.10 L1304.0 189.44 L1305.0 191.76 L1306.0 194.06 L1307.0 196.32 L1308.0 198.54 L1309.0 200.71 L1310.0 202.83 L1311.0 204.88 L1312.0 206.86 L1313.0 208.76 L1314.0 210.57 L1315.0 212.30 L1316.0 213.92 L1317.0 215.44 L1318.0 216.85 L1319.0 218.14 L1320.0 219.31 L1321.0 220.36 L1322.0 221.29 L1323.0 222.08 L1324.0 222.74 L1325.0 223.26 L1326.0 223.64 L1327.0 223.89 L1328.0 224.00 L1329.0 223.96 L1330.0 223.78 L1331.0 223.47 L1332.0 223.02 L1333.0 222.43 L1334.0 221.70 L1335.0 220.84 L1336.0 219.85 L1337.0 218.74 L1338.0 217.51 L1339.0 216.16 L1340.0 214.69 L1341.0 213.12 L1342.0 211.45 L1343.0 209.68 L1344.0 207.82 L1345.0 205.88 L1346.0 203.86 L1347.0 201.78 L1348.0 199.63 L1349.0 197.44 L1350.0 195.19 L1351.0 192.91 L1352.0 190.60 L1353.0 188.27 L1354.0 185.92 L1355.0 183.58 L1356.0 181.23 L1357.0 178.90 L1358.0 176.59 L1359.0 174.31 L1360.0 172.06 L1361.0 169.87 L1362.0 167.72 L1363.0 165.64 L1364.0 163.62 L1365.0 161.68 L1366.0 159.82 L1367.0 158.05 L1368.0 156.38 L1369.0 154.81 L1370.0 153.34 L1371.0 151.99 L1372.0 150.76 L1373.0 149.65 L1374.0 148.66 L1375.0 147.80 L1376.0 147.07 L1377.0 146.48 L1378.0 146.03 L1379.0 145.72 L1380.0 145.54" fill="none" stroke="#40338a" stroke-width="0.9" stroke-linejoin="round"/><clipPath id="wc"><rect x="548.0" y="142.0" width="832.0" height="173.5"/></clipPath><path d="M548.00 254.87 C548.36 259.36 549.46 278.37 550.19 281.82 C550.92 285.28 551.65 277.41 552.38 275.59 C553.10 273.77 553.83 269.19 554.56 270.91 C555.29 272.62 556.02 285.02 556.75 285.86 C557.48 286.71 558.21 277.62 558.94 275.97 C559.67 274.33 560.40 272.35 561.12 276.01 C561.85 279.67 562.58 300.06 563.31 297.93 C564.04 295.81 564.77 268.19 565.50 263.28 C566.23 258.37 566.96 265.07 567.69 268.49 C568.42 271.92 569.15 282.21 569.88 283.82 C570.60 285.43 571.33 280.50 572.06 278.14 C572.79 275.79 573.52 269.50 574.25 269.68 C574.98 269.87 575.71 277.71 576.44 279.27 C577.17 280.83 577.90 276.55 578.62 279.03 C579.35 281.52 580.08 295.83 580.81 294.17 C581.54 292.50 582.27 272.35 583.00 269.07 C583.73 265.78 584.46 273.87 585.19 274.45 C585.92 275.04 586.65 269.13 587.38 272.57 C588.10 276.01 588.83 297.95 589.56 295.08 C590.29 292.21 591.02 258.87 591.75 255.37 C592.48 251.86 593.21 269.83 593.94 274.07 C594.67 278.32 595.40 284.74 596.12 280.84 C596.85 276.93 597.58 251.35 598.31 250.64 C599.04 249.92 599.77 269.32 600.50 276.57 C601.23 283.82 601.96 293.38 602.69 294.13 C603.42 294.88 604.15 279.32 604.88 281.07 C605.60 282.81 606.33 307.63 607.06 304.60 C607.79 301.57 608.52 266.78 609.25 262.88 C609.98 258.98 610.71 277.47 611.44 281.21 C612.17 284.94 612.90 288.38 613.62 285.28 C614.35 282.18 615.08 260.70 615.81 262.59 C616.54 264.49 617.27 295.52 618.00 296.64 C618.73 297.76 619.46 268.45 620.19 269.31 C620.92 270.17 621.65 299.31 622.38 301.81 C623.10 304.30 623.83 286.07 624.56 284.28 C625.29 282.48 626.02 295.48 626.75 291.05 C627.48 286.63 628.21 263.91 628.94 257.73 C629.67 251.54 630.40 250.19 631.12 253.92 C631.85 257.66 632.58 278.19 633.31 280.12 C634.04 282.05 634.77 265.80 635.50 265.49 C636.23 265.18 636.96 277.68 637.69 278.25 C638.42 278.82 639.15 267.71 639.88 268.90 C640.60 270.09 641.33 280.67 642.06 285.41 C642.79 290.15 643.52 295.17 644.25 297.35 C644.98 299.54 645.71 302.90 646.44 298.54 C647.17 294.18 647.90 279.65 648.62 271.21 C649.35 262.77 650.08 247.67 650.81 247.91 C651.54 248.14 652.27 266.86 653.00 272.63 C653.73 278.41 654.46 285.98 655.19 282.56 C655.92 279.14 656.65 253.69 657.38 252.10 C658.10 250.51 658.83 269.26 659.56 273.03 C660.29 276.81 661.02 274.76 661.75 274.73 C662.48 274.70 663.21 272.36 663.94 272.84 C664.67 273.33 665.40 276.48 666.12 277.65 C666.85 278.83 667.58 277.15 668.31 279.87 C669.04 282.58 669.77 295.63 670.50 293.94 C671.23 292.25 671.96 272.52 672.69 269.73 C673.42 266.94 674.15 278.63 674.88 277.18 C675.60 275.74 676.33 260.52 677.06 261.09 C677.79 261.66 678.52 274.15 679.25 280.61 C679.98 287.07 680.71 300.39 681.44 299.83 C682.17 299.27 682.90 284.76 683.62 277.25 C684.35 269.73 685.08 254.16 685.81 254.76 C686.54 255.35 687.27 275.40 688.00 280.79 C688.73 286.19 689.46 285.44 690.19 287.12 C690.92 288.81 691.65 290.59 692.38 290.92 C693.10 291.25 693.83 290.99 694.56 289.13 C695.29 287.26 696.02 279.48 696.75 279.75 C697.48 280.02 698.21 294.50 698.94 290.75 C699.67 287.00 700.40 259.15 701.12 257.28 C701.85 255.41 702.58 276.64 703.31 279.53 C704.04 282.43 704.77 278.23 705.50 274.64 C706.23 271.06 706.96 260.93 707.69 258.02 C708.42 255.12 709.15 253.77 709.88 257.21 C710.60 260.65 711.33 276.22 712.06 278.66 C712.79 281.10 713.52 273.82 714.25 271.85 C714.98 269.88 715.71 265.72 716.44 266.81 C717.17 267.91 717.90 273.18 718.62 278.41 C719.35 283.65 720.08 299.99 720.81 298.23 C721.54 296.46 722.27 273.38 723.00 267.82 C723.73 262.25 724.46 264.32 725.19 264.82 C725.92 265.32 726.65 267.02 727.38 270.81 C728.10 274.59 728.83 286.27 729.56 287.54 C730.29 288.82 731.02 279.14 731.75 278.45 C732.48 277.76 733.21 283.17 733.94 283.38 C734.67 283.60 735.40 283.68 736.12 279.75 C736.85 275.81 737.58 263.60 738.31 259.79 C739.04 255.98 739.77 255.57 740.50 256.88 C741.23 258.19 741.96 265.59 742.69 267.63 C743.42 269.68 744.15 269.16 744.88 269.14 C745.60 269.13 746.33 266.37 747.06 267.54 C747.79 268.71 748.52 274.59 749.25 276.15 C749.98 277.72 750.71 275.57 751.44 276.95 C752.17 278.32 752.90 284.46 753.62 284.42 C754.35 284.38 755.08 282.81 755.81 276.70 C756.54 270.59 757.27 249.68 758.00 247.75 C758.73 245.82 759.46 259.72 760.19 265.14 C760.92 270.56 761.65 277.48 762.38 280.28 C763.10 283.07 763.83 280.81 764.56 281.90 C765.29 282.99 766.02 288.57 766.75 286.81 C767.48 285.04 768.21 273.94 768.94 271.32 C769.67 268.70 770.40 267.32 771.12 271.11 C771.85 274.89 772.58 294.24 773.31 294.04 C774.04 293.84 774.77 271.74 775.50 269.92 C776.23 268.10 776.96 285.08 777.69 283.12 C778.42 281.16 779.15 259.68 779.88 258.17 C780.60 256.65 781.33 274.65 782.06 274.04 C782.79 273.43 783.52 253.25 784.25 254.53 C784.98 255.81 785.71 277.55 786.44 281.73 C787.17 285.91 787.90 281.18 788.62 279.60 C789.35 278.02 790.08 275.05 790.81 272.25 C791.54 269.45 792.27 263.35 793.00 262.80 C793.73 262.25 794.46 264.16 795.19 268.93 C795.92 273.70 796.65 290.62 797.38 291.42 C798.10 292.22 798.83 276.33 799.56 273.71 C800.29 271.10 801.02 274.45 801.75 275.72 C802.48 277.00 803.21 279.97 803.94 281.36 C804.67 282.76 805.40 288.64 806.12 284.10 C806.85 279.57 807.58 254.69 808.31 254.16 C809.04 253.62 809.77 275.48 810.50 280.88 C811.23 286.28 811.96 288.71 812.69 286.57 C813.42 284.43 814.15 270.07 814.88 268.04 C815.60 266.00 816.33 272.88 817.06 274.37 C817.79 275.85 818.52 278.30 819.25 276.95 C819.98 275.59 820.71 267.41 821.44 266.23 C822.17 265.06 822.90 269.02 823.62 269.89 C824.35 270.77 825.08 272.46 825.81 271.47 C826.54 270.48 827.27 263.78 828.00 263.95 C828.73 264.11 829.46 269.16 830.19 272.45 C830.92 275.75 831.65 282.37 832.38 283.71 C833.10 285.06 833.83 280.73 834.56 280.53 C835.29 280.33 836.02 283.70 836.75 282.51 C837.48 281.32 838.21 272.22 838.94 273.38 C839.67 274.54 840.40 285.22 841.12 289.47 C841.85 293.73 842.58 301.33 843.31 298.91 C844.04 296.48 844.77 275.93 845.50 274.90 C846.23 273.86 846.96 288.46 847.69 292.71 C848.42 296.96 849.15 303.96 849.88 300.40 C850.60 296.84 851.33 273.92 852.06 271.33 C852.79 268.75 853.52 285.14 854.25 284.89 C854.98 284.63 855.71 270.17 856.44 269.80 C857.17 269.42 857.90 279.26 858.62 282.64 C859.35 286.01 860.08 288.54 860.81 290.02 C861.54 291.51 862.27 292.81 863.00 291.54 C863.73 290.28 864.46 284.46 865.19 282.44 C865.92 280.42 866.65 278.77 867.38 279.42 C868.10 280.06 868.83 286.28 869.56 286.29 C870.29 286.31 871.02 278.03 871.75 279.51 C872.48 281.00 873.21 295.82 873.94 295.20 C874.67 294.59 875.40 275.28 876.12 275.82 C876.85 276.36 877.58 297.99 878.31 298.42 C879.04 298.85 879.77 283.61 880.50 278.42 C881.23 273.23 881.96 269.96 882.69 267.28 C883.42 264.61 884.15 264.47 884.88 262.35 C885.60 260.23 886.33 249.05 887.06 254.57 C887.79 260.09 888.52 293.46 889.25 295.45 C889.98 297.44 890.71 272.27 891.44 266.52 C892.17 260.76 892.90 261.38 893.62 260.92 C894.35 260.46 895.08 259.29 895.81 263.74 C896.54 268.19 897.27 286.43 898.00 287.62 C898.73 288.80 899.46 276.66 900.19 270.85 C900.92 265.04 901.65 248.77 902.38 252.75 C903.10 256.73 903.83 291.83 904.56 294.72 C905.29 297.60 906.02 275.48 906.75 270.05 C907.48 264.61 908.21 259.65 908.94 262.10 C909.67 264.54 910.40 283.60 911.12 284.71 C911.85 285.81 912.58 267.93 913.31 268.71 C914.04 269.49 914.77 286.48 915.50 289.39 C916.23 292.29 916.96 286.68 917.69 286.15 C918.42 285.62 919.15 288.31 919.88 286.21 C920.60 284.12 921.33 275.11 922.06 273.60 C922.79 272.08 923.52 278.72 924.25 277.14 C924.98 275.55 925.71 262.30 926.44 264.07 C927.17 265.84 927.90 285.49 928.62 287.75 C929.35 290.01 930.08 281.60 930.81 277.64 C931.54 273.68 932.27 265.43 933.00 263.99 C933.73 262.54 934.46 264.23 935.19 268.99 C935.92 273.75 936.65 292.78 937.38 292.56 C938.10 292.34 938.83 269.45 939.56 267.68 C940.29 265.92 941.02 281.40 941.75 281.98 C942.48 282.56 943.21 272.81 943.94 271.18 C944.67 269.56 945.40 273.98 946.12 272.24 C946.85 270.50 947.58 260.37 948.31 260.76 C949.04 261.14 949.77 268.14 950.50 274.54 C951.23 280.95 951.96 296.08 952.69 299.17 C953.42 302.27 954.15 298.51 954.88 293.12 C955.60 287.74 956.33 269.18 957.06 266.86 C957.79 264.54 958.52 280.08 959.25 279.23 C959.98 278.38 960.71 262.88 961.44 261.78 C962.17 260.67 962.90 268.65 963.62 272.58 C964.35 276.51 965.08 287.05 965.81 285.36 C966.54 283.68 967.27 262.35 968.00 262.47 C968.73 262.59 969.46 279.56 970.19 286.09 C970.92 292.62 971.65 307.64 972.38 301.66 C973.10 295.68 973.83 250.50 974.56 250.20 C975.29 249.91 976.02 296.91 976.75 299.88 C977.48 302.86 978.21 273.98 978.94 268.04 C979.67 262.11 980.40 263.24 981.12 264.26 C981.85 265.28 982.58 268.70 983.31 274.16 C984.04 279.62 984.77 298.85 985.50 297.04 C986.23 295.23 986.96 263.82 987.69 263.31 C988.42 262.81 989.15 289.11 989.88 294.02 C990.60 298.93 991.33 295.05 992.06 292.80 C992.79 290.55 993.52 284.96 994.25 280.52 C994.98 276.08 995.71 267.52 996.44 266.14 C997.17 264.76 997.90 272.29 998.62 272.25 C999.35 272.20 1000.08 264.32 1000.81 265.87 C1001.54 267.41 1002.27 279.50 1003.00 281.55 C1003.73 283.59 1004.46 276.71 1005.19 278.15 C1005.92 279.60 1006.65 289.91 1007.38 290.21 C1008.10 290.52 1008.83 283.57 1009.56 279.96 C1010.29 276.36 1011.02 268.62 1011.75 268.59 C1012.48 268.55 1013.21 279.50 1013.94 279.75 C1014.67 279.99 1015.40 269.49 1016.12 270.06 C1016.85 270.63 1017.58 280.94 1018.31 283.17 C1019.04 285.39 1019.77 284.68 1020.50 283.40 C1021.23 282.13 1021.96 276.34 1022.69 275.51 C1023.42 274.68 1024.15 279.59 1024.88 278.44 C1025.60 277.28 1026.33 269.37 1027.06 268.60 C1027.79 267.82 1028.52 276.16 1029.25 273.77 C1029.98 271.38 1030.71 253.42 1031.44 254.25 C1032.17 255.07 1032.90 274.64 1033.62 278.74 C1034.35 282.84 1035.08 277.13 1035.81 278.84 C1036.54 280.55 1037.27 289.52 1038.00 289.00 C1038.73 288.48 1039.46 279.30 1040.19 275.72 C1040.92 272.13 1041.65 265.87 1042.38 267.46 C1043.10 269.05 1043.83 283.73 1044.56 285.25 C1045.29 286.78 1046.02 279.66 1046.75 276.62 C1047.48 273.58 1048.21 266.86 1048.94 267.02 C1049.67 267.18 1050.40 275.01 1051.12 277.59 C1051.85 280.16 1052.58 284.78 1053.31 282.49 C1054.04 280.20 1054.77 265.12 1055.50 263.84 C1056.23 262.55 1056.96 273.59 1057.69 274.79 C1058.42 275.99 1059.15 273.28 1059.88 271.04 C1060.60 268.80 1061.33 262.92 1062.06 261.36 C1062.79 259.80 1063.52 258.52 1064.25 261.68 C1064.98 264.85 1065.71 276.86 1066.44 280.34 C1067.17 283.82 1067.90 283.88 1068.62 282.57 C1069.35 281.25 1070.08 273.26 1070.81 272.45 C1071.54 271.63 1072.27 273.11 1073.00 277.66 C1073.73 282.21 1074.46 302.68 1075.19 299.75 C1075.92 296.81 1076.65 264.06 1077.38 260.06 C1078.10 256.06 1078.83 274.64 1079.56 275.76 C1080.29 276.88 1081.02 264.31 1081.75 266.80 C1082.48 269.28 1083.21 291.81 1083.94 290.66 C1084.67 289.51 1085.40 261.12 1086.12 259.90 C1086.85 258.68 1087.58 280.45 1088.31 283.35 C1089.04 286.26 1089.77 275.65 1090.50 277.35 C1091.23 279.04 1091.96 293.39 1092.69 293.52 C1093.42 293.64 1094.15 280.53 1094.88 278.09 C1095.60 275.65 1096.33 278.83 1097.06 278.87 C1097.79 278.91 1098.52 279.71 1099.25 278.32 C1099.98 276.92 1100.71 271.03 1101.44 270.52 C1102.17 270.01 1102.90 276.37 1103.62 275.25 C1104.35 274.13 1105.08 262.70 1105.81 263.80 C1106.54 264.90 1107.27 277.74 1108.00 281.85 C1108.73 285.96 1109.46 289.39 1110.19 288.45 C1110.92 287.51 1111.65 279.62 1112.38 276.24 C1113.10 272.85 1113.83 270.78 1114.56 268.15 C1115.29 265.51 1116.02 260.83 1116.75 260.44 C1117.48 260.06 1118.21 259.55 1118.94 265.83 C1119.67 272.10 1120.40 297.16 1121.12 298.07 C1121.85 298.98 1122.58 278.01 1123.31 271.29 C1124.04 264.57 1124.77 257.09 1125.50 257.75 C1126.23 258.40 1126.96 271.10 1127.69 275.22 C1128.42 279.34 1129.15 282.96 1129.88 282.45 C1130.60 281.94 1131.33 272.16 1132.06 272.14 C1132.79 272.11 1133.52 282.98 1134.25 282.29 C1134.98 281.60 1135.71 269.03 1136.44 268.01 C1137.17 266.99 1137.90 277.73 1138.62 276.16 C1139.35 274.59 1140.08 259.66 1140.81 258.59 C1141.54 257.52 1142.27 265.35 1143.00 269.76 C1143.73 274.17 1144.46 285.27 1145.19 285.05 C1145.92 284.83 1146.65 271.90 1147.38 268.44 C1148.10 264.98 1148.83 261.86 1149.56 264.30 C1150.29 266.74 1151.02 280.27 1151.75 283.11 C1152.48 285.94 1153.21 277.70 1153.94 281.32 C1154.67 284.94 1155.40 307.58 1156.12 304.81 C1156.85 302.05 1157.58 268.29 1158.31 264.71 C1159.04 261.13 1159.77 277.04 1160.50 283.35 C1161.23 289.65 1161.96 300.07 1162.69 302.53 C1163.42 304.99 1164.15 302.07 1164.88 298.11 C1165.60 294.15 1166.33 284.06 1167.06 278.79 C1167.79 273.52 1168.52 266.77 1169.25 266.49 C1169.98 266.21 1170.71 276.51 1171.44 277.11 C1172.17 277.72 1172.90 267.99 1173.62 270.10 C1174.35 272.21 1175.08 285.99 1175.81 289.77 C1176.54 293.55 1177.27 296.91 1178.00 292.77 C1178.73 288.63 1179.46 268.75 1180.19 264.93 C1180.92 261.11 1181.65 267.94 1182.38 269.85 C1183.10 271.76 1183.83 278.03 1184.56 276.38 C1185.29 274.74 1186.02 258.06 1186.75 259.97 C1187.48 261.89 1188.21 284.34 1188.94 287.89 C1189.67 291.44 1190.40 285.37 1191.12 281.25 C1191.85 277.13 1192.58 267.87 1193.31 263.17 C1194.04 258.47 1194.77 250.91 1195.50 253.03 C1196.23 255.15 1196.96 275.56 1197.69 275.89 C1198.42 276.22 1199.15 253.73 1199.88 255.01 C1200.60 256.28 1201.33 280.72 1202.06 283.53 C1202.79 286.34 1203.52 272.77 1204.25 271.88 C1204.98 270.99 1205.71 274.18 1206.44 278.17 C1207.17 282.17 1207.90 296.75 1208.62 295.85 C1209.35 294.95 1210.08 278.03 1210.81 272.78 C1211.54 267.52 1212.27 263.49 1213.00 264.34 C1213.73 265.19 1214.46 275.76 1215.19 277.85 C1215.92 279.94 1216.65 280.09 1217.38 276.88 C1218.10 273.67 1218.83 256.13 1219.56 258.59 C1220.29 261.05 1221.02 285.60 1221.75 291.62 C1222.48 297.64 1223.21 295.96 1223.94 294.72 C1224.67 293.48 1225.40 284.80 1226.12 284.18 C1226.85 283.55 1227.58 295.13 1228.31 290.96 C1229.04 286.79 1229.77 262.31 1230.50 259.17 C1231.23 256.03 1231.96 267.52 1232.69 272.13 C1233.42 276.73 1234.15 284.88 1234.88 286.80 C1235.60 288.73 1236.33 291.44 1237.06 283.68 C1237.79 275.92 1238.52 240.25 1239.25 240.24 C1239.98 240.23 1240.71 276.08 1241.44 283.63 C1242.17 291.17 1242.90 287.43 1243.62 285.53 C1244.35 283.62 1245.08 275.11 1245.81 272.20 C1246.54 269.28 1247.27 267.85 1248.00 268.02 C1248.73 268.19 1249.46 270.01 1250.19 273.23 C1250.92 276.45 1251.65 284.48 1252.38 287.36 C1253.10 290.23 1253.83 293.62 1254.56 290.49 C1255.29 287.35 1256.02 270.85 1256.75 268.55 C1257.48 266.25 1258.21 272.02 1258.94 276.68 C1259.67 281.34 1260.40 299.07 1261.12 296.52 C1261.85 293.97 1262.58 266.40 1263.31 261.36 C1264.04 256.33 1264.77 263.37 1265.50 266.31 C1266.23 269.25 1266.96 276.85 1267.69 279.01 C1268.42 281.17 1269.15 280.24 1269.88 279.25 C1270.60 278.27 1271.33 272.22 1272.06 273.11 C1272.79 274.00 1273.52 281.30 1274.25 284.59 C1274.98 287.88 1275.71 294.96 1276.44 292.85 C1277.17 290.75 1277.90 271.78 1278.62 271.97 C1279.35 272.16 1280.08 294.13 1280.81 293.99 C1281.54 293.85 1282.27 271.11 1283.00 271.12 C1283.73 271.12 1284.46 292.99 1285.19 294.02 C1285.92 295.04 1286.65 279.96 1287.38 277.24 C1288.10 274.52 1288.83 281.62 1289.56 277.70 C1290.29 273.78 1291.02 251.78 1291.75 253.72 C1292.48 255.65 1293.21 282.64 1293.94 289.30 C1294.67 295.97 1295.40 294.56 1296.12 293.69 C1296.85 292.82 1297.58 284.68 1298.31 284.08 C1299.04 283.47 1299.77 290.16 1300.50 290.05 C1301.23 289.93 1301.96 286.59 1302.69 283.37 C1303.42 280.15 1304.15 273.58 1304.88 270.74 C1305.60 267.90 1306.33 268.93 1307.06 266.35 C1307.79 263.77 1308.52 252.11 1309.25 255.26 C1309.98 258.40 1310.71 287.25 1311.44 285.21 C1312.17 283.17 1312.90 248.68 1313.62 243.02 C1314.35 237.35 1315.08 245.30 1315.81 251.22 C1316.54 257.14 1317.27 269.64 1318.00 278.54 C1318.73 287.45 1319.46 304.89 1320.19 304.64 C1320.92 304.39 1321.65 281.96 1322.38 277.04 C1323.10 272.11 1323.83 270.48 1324.56 275.09 C1325.29 279.71 1326.02 304.74 1326.75 304.74 C1327.48 304.74 1328.21 279.45 1328.94 275.08 C1329.67 270.70 1330.40 276.71 1331.12 278.50 C1331.85 280.29 1332.58 287.54 1333.31 285.82 C1334.04 284.10 1334.77 271.90 1335.50 268.17 C1336.23 264.44 1336.96 261.11 1337.69 263.43 C1338.42 265.75 1339.15 280.46 1339.88 282.08 C1340.60 283.69 1341.33 272.78 1342.06 273.13 C1342.79 273.48 1343.52 282.07 1344.25 284.18 C1344.98 286.30 1345.71 287.36 1346.44 285.83 C1347.17 284.30 1347.90 277.74 1348.62 275.01 C1349.35 272.28 1350.08 268.12 1350.81 269.46 C1351.54 270.80 1352.27 277.34 1353.00 283.04 C1353.73 288.74 1354.46 306.06 1355.19 303.67 C1355.92 301.28 1356.65 269.96 1357.38 268.68 C1358.10 267.39 1358.83 294.99 1359.56 295.96 C1360.29 296.92 1361.02 281.51 1361.75 274.48 C1362.48 267.44 1363.21 253.47 1363.94 253.76 C1364.67 254.05 1365.40 270.03 1366.12 276.21 C1366.85 282.40 1367.58 287.86 1368.31 290.87 C1369.04 293.88 1369.77 299.18 1370.50 294.26 C1371.23 289.35 1371.96 264.38 1372.69 261.37 C1373.42 258.36 1374.15 274.90 1374.88 276.21 C1375.60 277.53 1376.33 271.22 1377.06 269.25 C1377.79 267.29 1378.52 263.19 1379.25 264.42 C1379.98 265.65 1380.71 274.04 1381.44 276.61 C1382.17 279.19 1383.26 279.32 1383.62 279.86" fill="none" stroke="#d4572a" stroke-width="0.9" stroke-linejoin="round" clip-path="url(#wc)"/><text x="951.3" y="351.3" font-size="9.5" fill="#222" text-anchor="middle">1/6 Octave</text><circle cx="1323.3" cy="362.2" r="3.3" fill="#1a005a"/><circle cx="1351.5" cy="362.2" r="3.3" fill="#c4400d"/><text x="1329.00" y="365.00" font-size="7.8" fill="#444" text-anchor="start">Ch1</text><text x="1357.20" y="365.00" font-size="7.8" fill="#444" text-anchor="start">Ch2</text><path d="M573.25 377.50 L1379.50 377.50" stroke="#dcdcdc" stroke-width="0.9"/><path d="M573.25 385.00 L1379.50 385.00" stroke="#dcdcdc" stroke-width="0.9"/><path d="M573.25 392.50 L1379.50 392.50" stroke="#a8a8a8" stroke-width="1"/><path d="M573.25 400.00 L1379.50 400.00" stroke="#dcdcdc" stroke-width="0.9"/><path d="M573.25 407.50 L1379.50 407.50" stroke="#dcdcdc" stroke-width="0.9"/><path d="M573.25 415.00 L1379.50 415.00" stroke="#dcdcdc" stroke-width="0.9"/><path d="M573.25 422.50 L1379.50 422.50" stroke="#dcdcdc" stroke-width="0.9"/><path d="M573.25 430.00 L1379.50 430.00" stroke="#a8a8a8" stroke-width="1"/><path d="M573.25 437.50 L1379.50 437.50" stroke="#dcdcdc" stroke-width="0.9"/><path d="M573.25 445.00 L1379.50 445.00" stroke="#dcdcdc" stroke-width="0.9"/><path d="M573.25 452.50 L1379.50 452.50" stroke="#dcdcdc" stroke-width="0.9"/><path d="M573.25 460.00 L1379.50 460.00" stroke="#dcdcdc" stroke-width="0.9"/><path d="M573.25 467.50 L1379.50 467.50" stroke="#a8a8a8" stroke-width="1"/><path d="M573.25 475.00 L1379.50 475.00" stroke="#dcdcdc" stroke-width="0.9"/><path d="M573.25 370.10 L1379.50 370.10" stroke="#dcdcdc" stroke-width="0.9"/><path d="M576.41 369.80 L576.41 483.00" stroke="#d9d9d9" stroke-width="0.9"/><path d="M623.04 369.80 L623.04 483.00" stroke="#d9d9d9" stroke-width="0.9"/><path d="M656.13 369.80 L656.13 483.00" stroke="#d9d9d9" stroke-width="0.9"/><path d="M681.79 369.80 L681.79 483.00" stroke="#d9d9d9" stroke-width="0.9"/><path d="M702.75 369.80 L702.75 483.00" stroke="#d9d9d9" stroke-width="0.9"/><path d="M720.48 369.80 L720.48 483.00" stroke="#d9d9d9" stroke-width="0.9"/><path d="M735.84 369.80 L735.84 483.00" stroke="#d9d9d9" stroke-width="0.9"/><path d="M749.38 369.80 L749.38 483.00" stroke="#d9d9d9" stroke-width="0.9"/><path d="M761.50 369.80 L761.50 483.00" stroke="#8c8c8c" stroke-width="1.1"/><path d="M841.21 369.80 L841.21 483.00" stroke="#d9d9d9" stroke-width="0.9"/><path d="M887.84 369.80 L887.84 483.00" stroke="#d9d9d9" stroke-width="0.9"/><path d="M920.93 369.80 L920.93 483.00" stroke="#d9d9d9" stroke-width="0.9"/><path d="M946.59 369.80 L946.59 483.00" stroke="#d9d9d9" stroke-width="0.9"/><path d="M967.55 369.80 L967.55 483.00" stroke="#d9d9d9" stroke-width="0.9"/><path d="M985.28 369.80 L985.28 483.00" stroke="#d9d9d9" stroke-width="0.9"/><path d="M1000.64 369.80 L1000.64 483.00" stroke="#d9d9d9" stroke-width="0.9"/><path d="M1014.18 369.80 L1014.18 483.00" stroke="#d9d9d9" stroke-width="0.9"/><path d="M1026.30 369.80 L1026.30 483.00" stroke="#8c8c8c" stroke-width="1.1"/><path d="M1106.01 369.80 L1106.01 483.00" stroke="#d9d9d9" stroke-width="0.9"/><path d="M1152.64 369.80 L1152.64 483.00" stroke="#d9d9d9" stroke-width="0.9"/><path d="M1185.73 369.80 L1185.73 483.00" stroke="#d9d9d9" stroke-width="0.9"/><path d="M1211.39 369.80 L1211.39 483.00" stroke="#d9d9d9" stroke-width="0.9"/><path d="M1232.35 369.80 L1232.35 483.00" stroke="#d9d9d9" stroke-width="0.9"/><path d="M1250.08 369.80 L1250.08 483.00" stroke="#d9d9d9" stroke-width="0.9"/><path d="M1265.44 369.80 L1265.44 483.00" stroke="#d9d9d9" stroke-width="0.9"/><path d="M1278.98 369.80 L1278.98 483.00" stroke="#d9d9d9" stroke-width="0.9"/><path d="M1291.10 369.80 L1291.10 483.00" stroke="#8c8c8c" stroke-width="1.1"/><path d="M1370.81 369.80 L1370.81 483.00" stroke="#d9d9d9" stroke-width="0.9"/><clipPath id="c6"><rect x="573.25" y="369.3" width="806.25" height="119.19999999999999"/></clipPath><g clip-path="url(#c6)"><path d="M569.50 483.00 V432.05 H583.50 V483.00 Z M583.50 483.00 V431.73 H596.50 V483.00 Z M596.50 483.00 V431.32 H609.50 V483.00 Z M609.50 483.00 V430.91 H622.50 V483.00 Z M622.50 483.00 V430.50 H636.50 V483.00 Z M636.50 483.00 V430.09 H649.50 V483.00 Z M649.50 483.00 V429.68 H662.50 V483.00 Z M662.50 483.00 V429.27 H675.50 V483.00 Z M675.50 483.00 V428.86 H689.50 V483.00 Z M689.50 483.00 V428.46 H702.50 V483.00 Z M702.50 483.00 V428.05 H715.50 V483.00 Z M715.50 483.00 V427.64 H729.50 V483.00 Z M729.50 483.00 V427.23 H742.50 V483.00 Z M742.50 483.00 V426.82 H755.50 V483.00 Z M755.50 483.00 V426.39 H768.50 V483.00 Z M768.50 483.00 V425.84 H782.50 V483.00 Z M782.50 483.00 V425.27 H795.50 V483.00 Z M795.50 483.00 V424.69 H808.50 V483.00 Z M808.50 483.00 V424.12 H821.50 V483.00 Z M821.50 483.00 V423.54 H835.50 V483.00 Z M835.50 483.00 V422.95 H848.50 V483.00 Z M848.50 483.00 V422.23 H861.50 V483.00 Z M861.50 483.00 V421.48 H874.50 V483.00 Z M874.50 483.00 V420.73 H888.50 V483.00 Z M888.50 483.00 V419.98 H901.50 V483.00 Z M901.50 483.00 V419.23 H914.50 V483.00 Z M914.50 483.00 V418.45 H927.50 V483.00 Z M927.50 483.00 V417.48 H941.50 V483.00 Z M941.50 483.00 V416.42 H954.50 V483.00 Z M954.50 483.00 V415.03 H967.50 V483.00 Z M967.50 483.00 V413.17 H980.50 V483.00 Z M980.50 483.00 V410.91 H994.50 V483.00 Z M994.50 483.00 V407.13 H1007.50 V483.00 Z M1007.50 483.00 V400.22 H1020.50 V483.00 Z M1020.50 483.00 V370.97 H1033.50 V483.00 Z M1033.50 483.00 V399.96 H1047.50 V483.00 Z M1047.50 483.00 V406.06 H1060.50 V483.00 Z M1060.50 483.00 V409.12 H1073.50 V483.00 Z M1073.50 483.00 V411.06 H1086.50 V483.00 Z M1086.50 483.00 V412.42 H1100.50 V483.00 Z M1100.50 483.00 V413.26 H1113.50 V483.00 Z M1113.50 483.00 V414.04 H1126.50 V483.00 Z M1126.50 483.00 V414.62 H1139.50 V483.00 Z M1139.50 483.00 V415.22 H1153.50 V483.00 Z M1153.50 483.00 V415.85 H1166.50 V483.00 Z M1166.50 483.00 V416.47 H1179.50 V483.00 Z M1179.50 483.00 V417.09 H1192.50 V483.00 Z M1192.50 483.00 V417.71 H1206.50 V483.00 Z M1206.50 483.00 V418.19 H1219.50 V483.00 Z M1219.50 483.00 V418.48 H1232.50 V483.00 Z M1232.50 483.00 V418.78 H1245.50 V483.00 Z M1245.50 483.00 V419.07 H1259.50 V483.00 Z M1259.50 483.00 V419.37 H1272.50 V483.00 Z M1272.50 483.00 V419.66 H1285.50 V483.00 Z M1285.50 483.00 V419.93 H1298.50 V483.00 Z M1298.50 483.00 V420.08 H1312.50 V483.00 Z M1312.50 483.00 V420.22 H1325.50 V483.00 Z M1325.50 483.00 V420.36 H1338.50 V483.00 Z M1338.50 483.00 V420.49 H1351.50 V483.00 Z M1351.50 483.00 V420.63 H1365.50 V483.00 Z M1365.50 483.00 V420.76 H1379.50 V483.00 Z" fill="#1a005a"/><path d="M569.50 483.00 V472.50 H583.50 V483.00 Z M583.50 483.00 V468.59 H596.50 V483.00 Z M596.50 483.00 V471.20 H609.50 V483.00 Z M609.50 483.00 V465.20 H622.50 V483.00 Z M622.50 483.00 V469.90 H636.50 V483.00 Z M636.50 483.00 V464.68 H649.50 V483.00 Z M649.50 483.00 V467.29 H662.50 V483.00 Z M662.50 483.00 V467.29 H675.50 V483.00 Z M675.50 483.00 V468.59 H689.50 V483.00 Z M689.50 483.00 V467.55 H702.50 V483.00 Z M702.50 483.00 V467.55 H715.50 V483.00 Z M715.50 483.00 V466.51 H729.50 V483.00 Z M729.50 483.00 V463.38 H742.50 V483.00 Z M742.50 483.00 V465.46 H755.50 V483.00 Z M755.50 483.00 V466.51 H768.50 V483.00 Z M768.50 483.00 V468.59 H782.50 V483.00 Z M782.50 483.00 V463.90 H795.50 V483.00 Z M795.50 483.00 V465.46 H808.50 V483.00 Z M808.50 483.00 V466.51 H821.50 V483.00 Z M821.50 483.00 V462.60 H835.50 V483.00 Z M835.50 483.00 V462.08 H848.50 V483.00 Z M848.50 483.00 V463.38 H861.50 V483.00 Z M861.50 483.00 V462.60 H874.50 V483.00 Z M874.50 483.00 V461.55 H888.50 V483.00 Z M888.50 483.00 V462.86 H901.50 V483.00 Z M901.50 483.00 V462.34 H914.50 V483.00 Z M914.50 483.00 V462.34 H927.50 V483.00 Z M927.50 483.00 V462.08 H941.50 V483.00 Z M941.50 483.00 V462.38 H954.50 V483.00 Z M954.50 483.00 V462.17 H967.50 V483.00 Z M967.50 483.00 V461.63 H980.50 V483.00 Z M980.50 483.00 V461.35 H994.50 V483.00 Z M994.50 483.00 V460.85 H1007.50 V483.00 Z M1007.50 483.00 V460.54 H1020.50 V483.00 Z M1020.50 483.00 V460.00 H1033.50 V483.00 Z M1033.50 483.00 V459.63 H1047.50 V483.00 Z M1047.50 483.00 V459.18 H1060.50 V483.00 Z M1060.50 483.00 V458.50 H1073.50 V483.00 Z M1073.50 483.00 V458.92 H1086.50 V483.00 Z M1086.50 483.00 V457.81 H1100.50 V483.00 Z M1100.50 483.00 V457.81 H1113.50 V483.00 Z M1113.50 483.00 V457.65 H1126.50 V483.00 Z M1126.50 483.00 V457.04 H1139.50 V483.00 Z M1139.50 483.00 V456.61 H1153.50 V483.00 Z M1153.50 483.00 V456.05 H1166.50 V483.00 Z M1166.50 483.00 V456.06 H1179.50 V483.00 Z M1179.50 483.00 V455.46 H1192.50 V483.00 Z M1192.50 483.00 V455.10 H1206.50 V483.00 Z M1206.50 483.00 V454.99 H1219.50 V483.00 Z M1219.50 483.00 V454.53 H1232.50 V483.00 Z M1232.50 483.00 V453.91 H1245.50 V483.00 Z M1245.50 483.00 V453.53 H1259.50 V483.00 Z M1259.50 483.00 V453.11 H1272.50 V483.00 Z M1272.50 483.00 V452.80 H1285.50 V483.00 Z M1285.50 483.00 V452.44 H1298.50 V483.00 Z M1298.50 483.00 V452.10 H1312.50 V483.00 Z M1312.50 483.00 V451.62 H1325.50 V483.00 Z M1325.50 483.00 V451.43 H1338.50 V483.00 Z M1338.50 483.00 V450.99 H1351.50 V483.00 Z M1351.50 483.00 V450.57 H1365.50 V483.00 Z M1365.50 483.00 V450.34 H1379.50 V483.00 Z" fill="#c4400d"/><path d="M569.50 472.80 H583.50 M583.50 468.89 H596.50 M596.50 471.50 H609.50 M609.50 465.50 H622.50 M622.50 470.20 H636.50 M636.50 464.98 H649.50 M649.50 467.59 H662.50 M662.50 467.59 H675.50 M675.50 468.89 H689.50 M689.50 467.85 H702.50 M702.50 467.85 H715.50 M715.50 466.81 H729.50 M729.50 463.68 H742.50 M742.50 465.76 H755.50 M755.50 466.81 H768.50 M768.50 468.89 H782.50 M782.50 464.20 H795.50 M795.50 465.76 H808.50 M808.50 466.81 H821.50 M821.50 462.90 H835.50 M835.50 462.38 H848.50 M848.50 463.68 H861.50 M861.50 462.90 H874.50 M874.50 461.85 H888.50 M888.50 463.16 H901.50 M901.50 462.64 H914.50 M914.50 462.64 H927.50 M927.50 462.38 H941.50 M941.50 462.68 H954.50 M954.50 462.47 H967.50 M967.50 461.93 H980.50 M980.50 461.65 H994.50 M994.50 461.15 H1007.50 M1007.50 460.84 H1020.50 M1020.50 460.30 H1033.50 M1033.50 459.93 H1047.50 M1047.50 459.48 H1060.50 M1060.50 458.80 H1073.50 M1073.50 459.22 H1086.50 M1086.50 458.11 H1100.50 M1100.50 458.11 H1113.50 M1113.50 457.95 H1126.50 M1126.50 457.34 H1139.50 M1139.50 456.91 H1153.50 M1153.50 456.35 H1166.50 M1166.50 456.36 H1179.50 M1179.50 455.76 H1192.50 M1192.50 455.40 H1206.50 M1206.50 455.29 H1219.50 M1219.50 454.83 H1232.50 M1232.50 454.21 H1245.50 M1245.50 453.83 H1259.50 M1259.50 453.41 H1272.50 M1272.50 453.10 H1285.50 M1285.50 452.74 H1298.50 M1298.50 452.40 H1312.50 M1312.50 451.92 H1325.50 M1325.50 451.73 H1338.50 M1338.50 451.29 H1351.50 M1351.50 450.87 H1365.50 M1365.50 450.64 H1379.50" stroke="#fff" stroke-opacity="0.45" stroke-width="0.8" fill="none"/><path d="M583.50 483.00 V431.73 M596.50 483.00 V431.32 M609.50 483.00 V430.91 M622.50 483.00 V430.50 M636.50 483.00 V430.09 M649.50 483.00 V429.68 M662.50 483.00 V429.27 M675.50 483.00 V428.86 M689.50 483.00 V428.46 M702.50 483.00 V428.05 M715.50 483.00 V427.64 M729.50 483.00 V427.23 M742.50 483.00 V426.82 M755.50 483.00 V426.39 M768.50 483.00 V425.84 M782.50 483.00 V425.27 M795.50 483.00 V424.69 M808.50 483.00 V424.12 M821.50 483.00 V423.54 M835.50 483.00 V422.95 M848.50 483.00 V422.23 M861.50 483.00 V421.48 M874.50 483.00 V420.73 M888.50 483.00 V419.98 M901.50 483.00 V419.23 M914.50 483.00 V418.45 M927.50 483.00 V417.48 M941.50 483.00 V416.42 M954.50 483.00 V415.03 M967.50 483.00 V413.17 M980.50 483.00 V410.91 M994.50 483.00 V407.13 M1007.50 483.00 V400.22 M1020.50 483.00 V370.97 M1033.50 483.00 V370.97 M1047.50 483.00 V399.96 M1060.50 483.00 V406.06 M1073.50 483.00 V409.12 M1086.50 483.00 V411.06 M1100.50 483.00 V412.42 M1113.50 483.00 V413.26 M1126.50 483.00 V414.04 M1139.50 483.00 V414.62 M1153.50 483.00 V415.22 M1166.50 483.00 V415.85 M1179.50 483.00 V416.47 M1192.50 483.00 V417.09 M1206.50 483.00 V417.71 M1219.50 483.00 V418.19 M1232.50 483.00 V418.48 M1245.50 483.00 V418.78 M1259.50 483.00 V419.07 M1272.50 483.00 V419.37 M1285.50 483.00 V419.66 M1298.50 483.00 V419.93 M1312.50 483.00 V420.08 M1325.50 483.00 V420.22 M1338.50 483.00 V420.36 M1351.50 483.00 V420.49 M1365.50 483.00 V420.63" stroke="#fff" stroke-opacity="0.82" stroke-width="1.0" fill="none"/></g><path d="M573.25 369.80 L573.25 483.00" stroke="#777" stroke-width="1.1"/><path d="M573.25 483.00 L1379.50 483.00" stroke="#999" stroke-width="1.1"/><text x="569.30" y="395.40" font-size="8.1" fill="#555" text-anchor="end">-50.00</text><text x="569.30" y="432.90" font-size="8.1" fill="#555" text-anchor="end">-100.00</text><text x="569.30" y="470.40" font-size="8.1" fill="#555" text-anchor="end">-150.00</text><text x="761.50" y="494.20" font-size="8.1" fill="#555" text-anchor="middle">100.00</text><text x="1026.30" y="494.20" font-size="8.1" fill="#555" text-anchor="middle">1.00k</text><text x="1291.10" y="494.20" font-size="8.1" fill="#555" text-anchor="middle">10.00k</text><text x="971.80" y="507.60" font-size="9.2" fill="#555" text-anchor="middle">Frequency(Hz)</text><text x="0" y="0" font-size="9.2" fill="#555" text-anchor="middle" transform="translate(534.6 430.7) rotate(-90)">1/6 Octave(dBV)</text><path d="M521.00 515.60 L1382.00 515.60" stroke="#e4e4e4" stroke-width="1"/><text x="951.3" y="527.5" font-size="9.5" fill="#222" text-anchor="middle">1/3 Octave</text><circle cx="1323.3" cy="538.5" r="3.3" fill="#1a005a"/><circle cx="1351.5" cy="538.5" r="3.3" fill="#c4400d"/><text x="1329.00" y="541.30" font-size="7.8" fill="#444" text-anchor="start">Ch1</text><text x="1357.20" y="541.30" font-size="7.8" fill="#444" text-anchor="start">Ch2</text><path d="M573.25 554.50 L1379.50 554.50" stroke="#dcdcdc" stroke-width="0.9"/><path d="M573.25 562.00 L1379.50 562.00" stroke="#dcdcdc" stroke-width="0.9"/><path d="M573.25 569.50 L1379.50 569.50" stroke="#a8a8a8" stroke-width="1"/><path d="M573.25 577.00 L1379.50 577.00" stroke="#dcdcdc" stroke-width="0.9"/><path d="M573.25 584.50 L1379.50 584.50" stroke="#dcdcdc" stroke-width="0.9"/><path d="M573.25 592.00 L1379.50 592.00" stroke="#dcdcdc" stroke-width="0.9"/><path d="M573.25 599.50 L1379.50 599.50" stroke="#dcdcdc" stroke-width="0.9"/><path d="M573.25 607.00 L1379.50 607.00" stroke="#a8a8a8" stroke-width="1"/><path d="M573.25 614.50 L1379.50 614.50" stroke="#dcdcdc" stroke-width="0.9"/><path d="M573.25 622.00 L1379.50 622.00" stroke="#dcdcdc" stroke-width="0.9"/><path d="M573.25 629.50 L1379.50 629.50" stroke="#dcdcdc" stroke-width="0.9"/><path d="M573.25 637.00 L1379.50 637.00" stroke="#dcdcdc" stroke-width="0.9"/><path d="M573.25 644.50 L1379.50 644.50" stroke="#a8a8a8" stroke-width="1"/><path d="M573.25 652.00 L1379.50 652.00" stroke="#dcdcdc" stroke-width="0.9"/><path d="M573.25 546.80 L1379.50 546.80" stroke="#dcdcdc" stroke-width="0.9"/><path d="M580.78 546.50 L580.78 659.20" stroke="#d9d9d9" stroke-width="0.9"/><path d="M626.69 546.50 L626.69 659.20" stroke="#d9d9d9" stroke-width="0.9"/><path d="M659.26 546.50 L659.26 659.20" stroke="#d9d9d9" stroke-width="0.9"/><path d="M684.52 546.50 L684.52 659.20" stroke="#d9d9d9" stroke-width="0.9"/><path d="M705.16 546.50 L705.16 659.20" stroke="#d9d9d9" stroke-width="0.9"/><path d="M722.62 546.50 L722.62 659.20" stroke="#d9d9d9" stroke-width="0.9"/><path d="M737.74 546.50 L737.74 659.20" stroke="#d9d9d9" stroke-width="0.9"/><path d="M751.07 546.50 L751.07 659.20" stroke="#d9d9d9" stroke-width="0.9"/><path d="M763.00 546.50 L763.00 659.20" stroke="#8c8c8c" stroke-width="1.1"/><path d="M841.48 546.50 L841.48 659.20" stroke="#d9d9d9" stroke-width="0.9"/><path d="M887.39 546.50 L887.39 659.20" stroke="#d9d9d9" stroke-width="0.9"/><path d="M919.96 546.50 L919.96 659.20" stroke="#d9d9d9" stroke-width="0.9"/><path d="M945.22 546.50 L945.22 659.20" stroke="#d9d9d9" stroke-width="0.9"/><path d="M965.86 546.50 L965.86 659.20" stroke="#d9d9d9" stroke-width="0.9"/><path d="M983.32 546.50 L983.32 659.20" stroke="#d9d9d9" stroke-width="0.9"/><path d="M998.44 546.50 L998.44 659.20" stroke="#d9d9d9" stroke-width="0.9"/><path d="M1011.77 546.50 L1011.77 659.20" stroke="#d9d9d9" stroke-width="0.9"/><path d="M1023.70 546.50 L1023.70 659.20" stroke="#8c8c8c" stroke-width="1.1"/><path d="M1102.18 546.50 L1102.18 659.20" stroke="#d9d9d9" stroke-width="0.9"/><path d="M1148.09 546.50 L1148.09 659.20" stroke="#d9d9d9" stroke-width="0.9"/><path d="M1180.66 546.50 L1180.66 659.20" stroke="#d9d9d9" stroke-width="0.9"/><path d="M1205.92 546.50 L1205.92 659.20" stroke="#d9d9d9" stroke-width="0.9"/><path d="M1226.56 546.50 L1226.56 659.20" stroke="#d9d9d9" stroke-width="0.9"/><path d="M1244.02 546.50 L1244.02 659.20" stroke="#d9d9d9" stroke-width="0.9"/><path d="M1259.14 546.50 L1259.14 659.20" stroke="#d9d9d9" stroke-width="0.9"/><path d="M1272.47 546.50 L1272.47 659.20" stroke="#d9d9d9" stroke-width="0.9"/><path d="M1284.40 546.50 L1284.40 659.20" stroke="#8c8c8c" stroke-width="1.1"/><path d="M1362.88 546.50 L1362.88 659.20" stroke="#d9d9d9" stroke-width="0.9"/><clipPath id="c3"><rect x="573.25" y="546.0" width="806.25" height="118.70000000000005"/></clipPath><g clip-path="url(#c3)"><path d="M567.50 659.20 V606.75 H593.50 V659.20 Z M593.50 659.20 V606.06 H620.50 V659.20 Z M620.50 659.20 V605.24 H646.50 V659.20 Z M646.50 659.20 V604.42 H672.50 V659.20 Z M672.50 659.20 V603.60 H698.50 V659.20 Z M698.50 659.20 V602.78 H724.50 V659.20 Z M724.50 659.20 V601.96 H750.50 V659.20 Z M750.50 659.20 V601.11 H776.50 V659.20 Z M776.50 659.20 V600.00 H802.50 V659.20 Z M802.50 659.20 V598.85 H828.50 V659.20 Z M828.50 659.20 V597.65 H854.50 V659.20 Z M854.50 659.20 V596.20 H880.50 V659.20 Z M880.50 659.20 V594.70 H906.50 V659.20 Z M906.50 659.20 V593.13 H932.50 V659.20 Z M932.50 659.20 V591.07 H958.50 V659.20 Z M958.50 659.20 V587.74 H985.50 V659.20 Z M985.50 659.20 V580.42 H1011.50 V659.20 Z M1011.50 659.20 V547.97 H1037.50 V659.20 Z M1037.50 659.20 V579.79 H1063.50 V659.20 Z M1063.50 659.20 V585.63 H1089.50 V659.20 Z M1089.50 659.20 V587.99 H1115.50 V659.20 Z M1115.50 659.20 V589.36 H1141.50 V659.20 Z M1141.50 659.20 V590.57 H1167.50 V659.20 Z M1167.50 659.20 V591.81 H1193.50 V659.20 Z M1193.50 659.20 V592.90 H1219.50 V659.20 Z M1219.50 659.20 V593.52 H1245.50 V659.20 Z M1245.50 659.20 V594.10 H1271.50 V659.20 Z M1271.50 659.20 V594.65 H1297.50 V659.20 Z M1297.50 659.20 V594.96 H1323.50 V659.20 Z M1323.50 659.20 V595.24 H1349.50 V659.20 Z M1349.50 659.20 V595.49 H1379.50 V659.20 Z" fill="#1a005a"/><path d="M567.50 659.20 V644.25 H593.50 V659.20 Z M593.50 659.20 V642.17 H620.50 V659.20 Z M620.50 659.20 V640.34 H646.50 V659.20 Z M646.50 659.20 V642.17 H672.50 V659.20 Z M672.50 659.20 V641.65 H698.50 V659.20 Z M698.50 659.20 V641.65 H724.50 V659.20 Z M724.50 659.20 V638.52 H750.50 V659.20 Z M750.50 659.20 V642.17 H776.50 V659.20 Z M776.50 659.20 V639.04 H802.50 V659.20 Z M802.50 659.20 V638.52 H828.50 V659.20 Z M828.50 659.20 V637.74 H854.50 V659.20 Z M854.50 659.20 V637.22 H880.50 V659.20 Z M880.50 659.20 V636.43 H906.50 V659.20 Z M906.50 659.20 V636.96 H932.50 V659.20 Z M932.50 659.20 V636.43 H958.50 V659.20 Z M958.50 659.20 V636.30 H985.50 V659.20 Z M985.50 659.20 V635.25 H1011.50 V659.20 Z M1011.50 659.20 V634.97 H1037.50 V659.20 Z M1037.50 659.20 V634.22 H1063.50 V659.20 Z M1063.50 659.20 V633.03 H1089.50 V659.20 Z M1089.50 659.20 V632.41 H1115.50 V659.20 Z M1115.50 659.20 V631.72 H1141.50 V659.20 Z M1141.50 659.20 V630.91 H1167.50 V659.20 Z M1167.50 659.20 V630.17 H1193.50 V659.20 Z M1193.50 659.20 V629.60 H1219.50 V659.20 Z M1219.50 659.20 V628.94 H1245.50 V659.20 Z M1245.50 659.20 V628.12 H1271.50 V659.20 Z M1271.50 659.20 V627.36 H1297.50 V659.20 Z M1297.50 659.20 V626.62 H1323.50 V659.20 Z M1323.50 659.20 V625.76 H1349.50 V659.20 Z M1349.50 659.20 V624.99 H1379.50 V659.20 Z" fill="#c4400d"/><path d="M567.50 644.55 H593.50 M593.50 642.47 H620.50 M620.50 640.64 H646.50 M646.50 642.47 H672.50 M672.50 641.95 H698.50 M698.50 641.95 H724.50 M724.50 638.82 H750.50 M750.50 642.47 H776.50 M776.50 639.34 H802.50 M802.50 638.82 H828.50 M828.50 638.04 H854.50 M854.50 637.52 H880.50 M880.50 636.73 H906.50 M906.50 637.26 H932.50 M932.50 636.73 H958.50 M958.50 636.60 H985.50 M985.50 635.55 H1011.50 M1011.50 635.27 H1037.50 M1037.50 634.52 H1063.50 M1063.50 633.33 H1089.50 M1089.50 632.71 H1115.50 M1115.50 632.02 H1141.50 M1141.50 631.21 H1167.50 M1167.50 630.47 H1193.50 M1193.50 629.90 H1219.50 M1219.50 629.24 H1245.50 M1245.50 628.42 H1271.50 M1271.50 627.66 H1297.50 M1297.50 626.92 H1323.50 M1323.50 626.06 H1349.50 M1349.50 625.29 H1379.50" stroke="#fff" stroke-opacity="0.45" stroke-width="0.8" fill="none"/><path d="M593.50 659.20 V606.06 M620.50 659.20 V605.24 M646.50 659.20 V604.42 M672.50 659.20 V603.60 M698.50 659.20 V602.78 M724.50 659.20 V601.96 M750.50 659.20 V601.11 M776.50 659.20 V600.00 M802.50 659.20 V598.85 M828.50 659.20 V597.65 M854.50 659.20 V596.20 M880.50 659.20 V594.70 M906.50 659.20 V593.13 M932.50 659.20 V591.07 M958.50 659.20 V587.74 M985.50 659.20 V580.42 M1011.50 659.20 V547.97 M1037.50 659.20 V547.97 M1063.50 659.20 V579.79 M1089.50 659.20 V585.63 M1115.50 659.20 V587.99 M1141.50 659.20 V589.36 M1167.50 659.20 V590.57 M1193.50 659.20 V591.81 M1219.50 659.20 V592.90 M1245.50 659.20 V593.52 M1271.50 659.20 V594.10 M1297.50 659.20 V594.65 M1323.50 659.20 V594.96 M1349.50 659.20 V595.24" stroke="#fff" stroke-opacity="0.82" stroke-width="1.0" fill="none"/></g><path d="M573.25 546.50 L573.25 659.20" stroke="#777" stroke-width="1.1"/><path d="M573.25 659.20 L1379.50 659.20" stroke="#999" stroke-width="1.1"/><text x="569.30" y="572.40" font-size="8.1" fill="#555" text-anchor="end">-50.00</text><text x="569.30" y="609.90" font-size="8.1" fill="#555" text-anchor="end">-100.00</text><text x="569.30" y="647.40" font-size="8.1" fill="#555" text-anchor="end">-150.00</text><text x="763.00" y="670.20" font-size="8.1" fill="#555" text-anchor="middle">100.00</text><text x="1023.70" y="670.20" font-size="8.1" fill="#555" text-anchor="middle">1.00k</text><text x="1284.40" y="670.20" font-size="8.1" fill="#555" text-anchor="middle">10.00k</text><text x="971.80" y="683.80" font-size="9.2" fill="#555" text-anchor="middle">Frequency(Hz)</text><text x="0" y="0" font-size="9.2" fill="#555" text-anchor="middle" transform="translate(534.6 607.1) rotate(-90)">1/3 Octave(dBV)</text><path d="M521.00 691.80 L1382.00 691.80" stroke="#e4e4e4" stroke-width="1"/><text x="951.3" y="703.7" font-size="9.5" fill="#222" text-anchor="middle">1/24 Octave</text><circle cx="1323.3" cy="714.6" r="3.3" fill="#1a005a"/><circle cx="1351.5" cy="714.6" r="3.3" fill="#c4400d"/><text x="1329.00" y="717.40" font-size="7.8" fill="#444" text-anchor="start">Ch1</text><text x="1357.20" y="717.40" font-size="7.8" fill="#444" text-anchor="start">Ch2</text><path d="M573.25 730.30 L1379.50 730.30" stroke="#dcdcdc" stroke-width="0.9"/><path d="M573.25 737.50 L1379.50 737.50" stroke="#dcdcdc" stroke-width="0.9"/><path d="M573.25 744.70 L1379.50 744.70" stroke="#a8a8a8" stroke-width="1"/><path d="M573.25 751.90 L1379.50 751.90" stroke="#dcdcdc" stroke-width="0.9"/><path d="M573.25 759.10 L1379.50 759.10" stroke="#dcdcdc" stroke-width="0.9"/><path d="M573.25 766.30 L1379.50 766.30" stroke="#dcdcdc" stroke-width="0.9"/><path d="M573.25 773.50 L1379.50 773.50" stroke="#dcdcdc" stroke-width="0.9"/><path d="M573.25 780.70 L1379.50 780.70" stroke="#a8a8a8" stroke-width="1"/><path d="M573.25 787.90 L1379.50 787.90" stroke="#dcdcdc" stroke-width="0.9"/><path d="M573.25 795.10 L1379.50 795.10" stroke="#dcdcdc" stroke-width="0.9"/><path d="M573.25 802.30 L1379.50 802.30" stroke="#dcdcdc" stroke-width="0.9"/><path d="M573.25 809.50 L1379.50 809.50" stroke="#dcdcdc" stroke-width="0.9"/><path d="M573.25 816.70 L1379.50 816.70" stroke="#a8a8a8" stroke-width="1"/><path d="M573.25 823.90 L1379.50 823.90" stroke="#dcdcdc" stroke-width="0.9"/><path d="M573.25 831.10 L1379.50 831.10" stroke="#dcdcdc" stroke-width="0.9"/><path d="M573.25 723.40 L1379.50 723.40" stroke="#dcdcdc" stroke-width="0.9"/><path d="M574.73 723.10 L574.73 836.40" stroke="#d9d9d9" stroke-width="0.9"/><path d="M621.83 723.10 L621.83 836.40" stroke="#d9d9d9" stroke-width="0.9"/><path d="M655.25 723.10 L655.25 836.40" stroke="#d9d9d9" stroke-width="0.9"/><path d="M681.17 723.10 L681.17 836.40" stroke="#d9d9d9" stroke-width="0.9"/><path d="M702.36 723.10 L702.36 836.40" stroke="#d9d9d9" stroke-width="0.9"/><path d="M720.26 723.10 L720.26 836.40" stroke="#d9d9d9" stroke-width="0.9"/><path d="M735.78 723.10 L735.78 836.40" stroke="#d9d9d9" stroke-width="0.9"/><path d="M749.46 723.10 L749.46 836.40" stroke="#d9d9d9" stroke-width="0.9"/><path d="M761.70 723.10 L761.70 836.40" stroke="#8c8c8c" stroke-width="1.1"/><path d="M842.23 723.10 L842.23 836.40" stroke="#d9d9d9" stroke-width="0.9"/><path d="M889.33 723.10 L889.33 836.40" stroke="#d9d9d9" stroke-width="0.9"/><path d="M922.75 723.10 L922.75 836.40" stroke="#d9d9d9" stroke-width="0.9"/><path d="M948.67 723.10 L948.67 836.40" stroke="#d9d9d9" stroke-width="0.9"/><path d="M969.86 723.10 L969.86 836.40" stroke="#d9d9d9" stroke-width="0.9"/><path d="M987.76 723.10 L987.76 836.40" stroke="#d9d9d9" stroke-width="0.9"/><path d="M1003.28 723.10 L1003.28 836.40" stroke="#d9d9d9" stroke-width="0.9"/><path d="M1016.96 723.10 L1016.96 836.40" stroke="#d9d9d9" stroke-width="0.9"/><path d="M1029.20 723.10 L1029.20 836.40" stroke="#8c8c8c" stroke-width="1.1"/><path d="M1109.73 723.10 L1109.73 836.40" stroke="#d9d9d9" stroke-width="0.9"/><path d="M1156.83 723.10 L1156.83 836.40" stroke="#d9d9d9" stroke-width="0.9"/><path d="M1190.25 723.10 L1190.25 836.40" stroke="#d9d9d9" stroke-width="0.9"/><path d="M1216.17 723.10 L1216.17 836.40" stroke="#d9d9d9" stroke-width="0.9"/><path d="M1237.36 723.10 L1237.36 836.40" stroke="#d9d9d9" stroke-width="0.9"/><path d="M1255.26 723.10 L1255.26 836.40" stroke="#d9d9d9" stroke-width="0.9"/><path d="M1270.78 723.10 L1270.78 836.40" stroke="#d9d9d9" stroke-width="0.9"/><path d="M1284.46 723.10 L1284.46 836.40" stroke="#d9d9d9" stroke-width="0.9"/><path d="M1296.70 723.10 L1296.70 836.40" stroke="#8c8c8c" stroke-width="1.1"/><path d="M1377.23 723.10 L1377.23 836.40" stroke="#d9d9d9" stroke-width="0.9"/><clipPath id="c24"><rect x="573.25" y="722.6" width="806.25" height="119.29999999999995"/></clipPath><g clip-path="url(#c24)"><path d="M571.21 831.00 V787.04 H574.57 V831.00 Z M574.57 831.00 V786.99 H577.92 V831.00 Z M577.92 831.00 V786.89 H581.28 V831.00 Z M581.28 831.00 V784.92 H584.63 V831.00 Z M584.63 831.00 V786.70 H587.99 V831.00 Z M587.99 831.00 V786.60 H591.34 V831.00 Z M591.34 831.00 V784.63 H594.70 V831.00 Z M594.70 831.00 V786.40 H598.05 V831.00 Z M598.05 831.00 V786.30 H601.41 V831.00 Z M601.41 831.00 V786.21 H604.76 V831.00 Z M604.76 831.00 V786.11 H608.12 V831.00 Z M608.12 831.00 V786.01 H611.47 V831.00 Z M611.47 831.00 V784.04 H614.83 V831.00 Z M614.83 831.00 V785.81 H618.18 V831.00 Z M618.18 831.00 V785.72 H621.54 V831.00 Z M621.54 831.00 V783.74 H624.89 V831.00 Z M624.89 831.00 V785.52 H628.25 V831.00 Z M628.25 831.00 V785.42 H631.61 V831.00 Z M631.61 831.00 V785.32 H634.96 V831.00 Z M634.96 831.00 V785.22 H638.32 V831.00 Z M638.32 831.00 V785.13 H641.67 V831.00 Z M641.67 831.00 V785.03 H645.03 V831.00 Z M645.03 831.00 V784.93 H648.38 V831.00 Z M648.38 831.00 V782.38 H651.74 V831.00 Z M651.74 831.00 V784.73 H655.09 V831.00 Z M655.09 831.00 V782.19 H658.45 V831.00 Z M658.45 831.00 V784.54 H661.80 V831.00 Z M661.80 831.00 V784.44 H665.16 V831.00 Z M665.16 831.00 V781.89 H668.51 V831.00 Z M668.51 831.00 V784.24 H671.87 V831.00 Z M671.87 831.00 V784.14 H675.22 V831.00 Z M675.22 831.00 V781.60 H678.58 V831.00 Z M678.58 831.00 V783.95 H681.93 V831.00 Z M681.93 831.00 V783.85 H685.29 V831.00 Z M685.29 831.00 V783.75 H688.64 V831.00 Z M688.64 831.00 V781.78 H692.00 V831.00 Z M692.00 831.00 V783.55 H695.35 V831.00 Z M695.35 831.00 V783.46 H698.71 V831.00 Z M698.71 831.00 V781.49 H702.07 V831.00 Z M702.07 831.00 V783.26 H705.42 V831.00 Z M705.42 831.00 V783.16 H708.78 V831.00 Z M708.78 831.00 V783.06 H712.13 V831.00 Z M712.13 831.00 V782.97 H715.49 V831.00 Z M715.49 831.00 V782.87 H718.84 V831.00 Z M718.84 831.00 V780.90 H722.20 V831.00 Z M722.20 831.00 V782.67 H725.55 V831.00 Z M725.55 831.00 V782.57 H728.91 V831.00 Z M728.91 831.00 V782.47 H732.26 V831.00 Z M732.26 831.00 V782.38 H735.62 V831.00 Z M735.62 831.00 V782.28 H738.97 V831.00 Z M738.97 831.00 V782.18 H742.33 V831.00 Z M742.33 831.00 V780.21 H745.68 V831.00 Z M745.68 831.00 V781.98 H749.04 V831.00 Z M749.04 831.00 V781.89 H752.39 V831.00 Z M752.39 831.00 V781.79 H755.75 V831.00 Z M755.75 831.00 V781.69 H759.10 V831.00 Z M759.10 831.00 V781.59 H762.46 V831.00 Z M762.46 831.00 V781.46 H765.81 V831.00 Z M765.81 831.00 V781.33 H769.17 V831.00 Z M769.17 831.00 V781.19 H772.52 V831.00 Z M772.52 831.00 V781.05 H775.88 V831.00 Z M775.88 831.00 V780.91 H779.24 V831.00 Z M779.24 831.00 V780.77 H782.59 V831.00 Z M782.59 831.00 V780.64 H785.95 V831.00 Z M785.95 831.00 V780.50 H789.30 V831.00 Z M789.30 831.00 V780.36 H792.66 V831.00 Z M792.66 831.00 V780.22 H796.01 V831.00 Z M796.01 831.00 V780.08 H799.37 V831.00 Z M799.37 831.00 V779.95 H802.72 V831.00 Z M802.72 831.00 V779.81 H806.08 V831.00 Z M806.08 831.00 V779.67 H809.43 V831.00 Z M809.43 831.00 V779.53 H812.79 V831.00 Z M812.79 831.00 V779.39 H816.14 V831.00 Z M816.14 831.00 V779.26 H819.50 V831.00 Z M819.50 831.00 V779.12 H822.85 V831.00 Z M822.85 831.00 V778.98 H826.21 V831.00 Z M826.21 831.00 V778.84 H829.56 V831.00 Z M829.56 831.00 V778.70 H832.92 V831.00 Z M832.92 831.00 V778.57 H836.27 V831.00 Z M836.27 831.00 V778.43 H839.63 V831.00 Z M839.63 831.00 V778.29 H842.98 V831.00 Z M842.98 831.00 V778.12 H846.34 V831.00 Z M846.34 831.00 V777.94 H849.70 V831.00 Z M849.70 831.00 V777.76 H853.05 V831.00 Z M853.05 831.00 V777.58 H856.41 V831.00 Z M856.41 831.00 V777.40 H859.76 V831.00 Z M859.76 831.00 V777.22 H863.12 V831.00 Z M863.12 831.00 V777.04 H866.47 V831.00 Z M866.47 831.00 V776.86 H869.83 V831.00 Z M869.83 831.00 V776.68 H873.18 V831.00 Z M873.18 831.00 V776.50 H876.54 V831.00 Z M876.54 831.00 V776.32 H879.89 V831.00 Z M879.89 831.00 V776.14 H883.25 V831.00 Z M883.25 831.00 V775.96 H886.60 V831.00 Z M886.60 831.00 V775.78 H889.96 V831.00 Z M889.96 831.00 V775.60 H893.31 V831.00 Z M893.31 831.00 V775.42 H896.67 V831.00 Z M896.67 831.00 V775.24 H900.02 V831.00 Z M900.02 831.00 V775.06 H903.38 V831.00 Z M903.38 831.00 V774.88 H906.73 V831.00 Z M906.73 831.00 V774.70 H910.09 V831.00 Z M910.09 831.00 V774.52 H913.44 V831.00 Z M913.44 831.00 V774.34 H916.80 V831.00 Z M916.80 831.00 V774.16 H920.16 V831.00 Z M920.16 831.00 V773.98 H923.51 V831.00 Z M923.51 831.00 V773.76 H926.87 V831.00 Z M926.87 831.00 V773.51 H930.22 V831.00 Z M930.22 831.00 V773.27 H933.58 V831.00 Z M933.58 831.00 V773.03 H936.93 V831.00 Z M936.93 831.00 V772.79 H940.29 V831.00 Z M940.29 831.00 V772.54 H943.64 V831.00 Z M943.64 831.00 V772.30 H947.00 V831.00 Z M947.00 831.00 V772.06 H950.35 V831.00 Z M950.35 831.00 V771.73 H953.71 V831.00 Z M953.71 831.00 V771.41 H957.06 V831.00 Z M957.06 831.00 V771.08 H960.42 V831.00 Z M960.42 831.00 V770.76 H963.77 V831.00 Z M963.77 831.00 V770.31 H967.13 V831.00 Z M967.13 831.00 V769.86 H970.48 V831.00 Z M970.48 831.00 V769.41 H973.84 V831.00 Z M973.84 831.00 V768.96 H977.19 V831.00 Z M977.19 831.00 V768.46 H980.55 V831.00 Z M980.55 831.00 V767.96 H983.90 V831.00 Z M983.90 831.00 V767.45 H987.26 V831.00 Z M987.26 831.00 V766.94 H990.61 V831.00 Z M990.61 831.00 V766.17 H993.97 V831.00 Z M993.97 831.00 V765.40 H997.33 V831.00 Z M997.33 831.00 V764.63 H1000.68 V831.00 Z M1000.68 831.00 V763.86 H1004.04 V831.00 Z M1004.04 831.00 V762.27 H1007.39 V831.00 Z M1007.39 831.00 V760.66 H1010.75 V831.00 Z M1010.75 831.00 V759.06 H1014.10 V831.00 Z M1014.10 831.00 V757.45 H1017.46 V831.00 Z M1017.46 831.00 V755.64 H1020.81 V831.00 Z M1020.81 831.00 V753.20 H1024.17 V831.00 Z M1024.17 831.00 V748.30 H1027.52 V831.00 Z M1027.52 831.00 V724.04 H1030.88 V831.00 Z M1030.88 831.00 V748.01 H1034.23 V831.00 Z M1034.23 831.00 V752.91 H1037.59 V831.00 Z M1037.59 831.00 V755.36 H1040.94 V831.00 Z M1040.94 831.00 V757.46 H1044.30 V831.00 Z M1044.30 831.00 V758.75 H1047.65 V831.00 Z M1047.65 831.00 V760.04 H1051.01 V831.00 Z M1051.01 831.00 V761.33 H1054.36 V831.00 Z M1054.36 831.00 V762.63 H1057.72 V831.00 Z M1057.72 831.00 V763.26 H1061.07 V831.00 Z M1061.07 831.00 V763.89 H1064.43 V831.00 Z M1064.43 831.00 V764.52 H1067.79 V831.00 Z M1067.79 831.00 V765.15 H1071.14 V831.00 Z M1071.14 831.00 V765.60 H1074.50 V831.00 Z M1074.50 831.00 V766.05 H1077.85 V831.00 Z M1077.85 831.00 V766.50 H1081.21 V831.00 Z M1081.21 831.00 V766.95 H1084.56 V831.00 Z M1084.56 831.00 V767.27 H1087.92 V831.00 Z M1087.92 831.00 V767.60 H1091.27 V831.00 Z M1091.27 831.00 V767.92 H1094.63 V831.00 Z M1094.63 831.00 V768.24 H1097.98 V831.00 Z M1097.98 831.00 V768.42 H1101.34 V831.00 Z M1101.34 831.00 V768.60 H1104.69 V831.00 Z M1104.69 831.00 V768.78 H1108.05 V831.00 Z M1108.05 831.00 V768.96 H1111.40 V831.00 Z M1111.40 831.00 V769.16 H1114.76 V831.00 Z M1114.76 831.00 V769.36 H1118.11 V831.00 Z M1118.11 831.00 V769.56 H1121.47 V831.00 Z M1121.47 831.00 V769.76 H1124.82 V831.00 Z M1124.82 831.00 V769.88 H1128.18 V831.00 Z M1128.18 831.00 V770.01 H1131.53 V831.00 Z M1131.53 831.00 V770.13 H1134.89 V831.00 Z M1134.89 831.00 V770.26 H1138.24 V831.00 Z M1138.24 831.00 V770.41 H1141.60 V831.00 Z M1141.60 831.00 V770.56 H1144.96 V831.00 Z M1144.96 831.00 V770.71 H1148.31 V831.00 Z M1148.31 831.00 V770.86 H1151.67 V831.00 Z M1151.67 831.00 V771.00 H1155.02 V831.00 Z M1155.02 831.00 V771.15 H1158.38 V831.00 Z M1158.38 831.00 V771.30 H1161.73 V831.00 Z M1161.73 831.00 V771.45 H1165.09 V831.00 Z M1165.09 831.00 V771.60 H1168.44 V831.00 Z M1168.44 831.00 V771.75 H1171.80 V831.00 Z M1171.80 831.00 V771.90 H1175.15 V831.00 Z M1175.15 831.00 V772.05 H1178.51 V831.00 Z M1178.51 831.00 V772.20 H1181.86 V831.00 Z M1181.86 831.00 V772.35 H1185.22 V831.00 Z M1185.22 831.00 V772.50 H1188.57 V831.00 Z M1188.57 831.00 V772.64 H1191.93 V831.00 Z M1191.93 831.00 V772.79 H1195.28 V831.00 Z M1195.28 831.00 V772.94 H1198.64 V831.00 Z M1198.64 831.00 V773.09 H1201.99 V831.00 Z M1201.99 831.00 V773.24 H1205.35 V831.00 Z M1205.35 831.00 V773.39 H1208.70 V831.00 Z M1208.70 831.00 V773.54 H1212.06 V831.00 Z M1212.06 831.00 V773.63 H1215.42 V831.00 Z M1215.42 831.00 V773.70 H1218.77 V831.00 Z M1218.77 831.00 V773.77 H1222.13 V831.00 Z M1222.13 831.00 V773.84 H1225.48 V831.00 Z M1225.48 831.00 V773.91 H1228.84 V831.00 Z M1228.84 831.00 V773.98 H1232.19 V831.00 Z M1232.19 831.00 V774.05 H1235.55 V831.00 Z M1235.55 831.00 V774.12 H1238.90 V831.00 Z M1238.90 831.00 V774.19 H1242.26 V831.00 Z M1242.26 831.00 V774.26 H1245.61 V831.00 Z M1245.61 831.00 V774.33 H1248.97 V831.00 Z M1248.97 831.00 V774.40 H1252.32 V831.00 Z M1252.32 831.00 V774.47 H1255.68 V831.00 Z M1255.68 831.00 V774.54 H1259.03 V831.00 Z M1259.03 831.00 V774.61 H1262.39 V831.00 Z M1262.39 831.00 V774.69 H1265.74 V831.00 Z M1265.74 831.00 V774.76 H1269.10 V831.00 Z M1269.10 831.00 V774.83 H1272.45 V831.00 Z M1272.45 831.00 V774.90 H1275.81 V831.00 Z M1275.81 831.00 V774.97 H1279.16 V831.00 Z M1279.16 831.00 V775.04 H1282.52 V831.00 Z M1282.52 831.00 V775.11 H1285.88 V831.00 Z M1285.88 831.00 V775.18 H1289.23 V831.00 Z M1289.23 831.00 V775.25 H1292.59 V831.00 Z M1292.59 831.00 V775.32 H1295.94 V831.00 Z M1295.94 831.00 V775.38 H1299.30 V831.00 Z M1299.30 831.00 V775.41 H1302.65 V831.00 Z M1302.65 831.00 V775.45 H1306.01 V831.00 Z M1306.01 831.00 V775.48 H1309.36 V831.00 Z M1309.36 831.00 V775.51 H1312.72 V831.00 Z M1312.72 831.00 V775.55 H1316.07 V831.00 Z M1316.07 831.00 V775.58 H1319.43 V831.00 Z M1319.43 831.00 V775.61 H1322.78 V831.00 Z M1322.78 831.00 V775.65 H1326.14 V831.00 Z M1326.14 831.00 V775.68 H1329.49 V831.00 Z M1329.49 831.00 V775.71 H1332.85 V831.00 Z M1332.85 831.00 V775.74 H1336.20 V831.00 Z M1336.20 831.00 V775.78 H1339.56 V831.00 Z M1339.56 831.00 V775.81 H1342.91 V831.00 Z M1342.91 831.00 V775.84 H1346.27 V831.00 Z M1346.27 831.00 V775.88 H1349.62 V831.00 Z M1349.62 831.00 V775.91 H1352.98 V831.00 Z M1352.98 831.00 V775.94 H1356.33 V831.00 Z M1356.33 831.00 V775.98 H1359.69 V831.00 Z M1359.69 831.00 V776.01 H1363.05 V831.00 Z M1363.05 831.00 V776.04 H1366.40 V831.00 Z M1366.40 831.00 V776.07 H1369.76 V831.00 Z M1369.76 831.00 V776.11 H1373.11 V831.00 Z M1373.11 831.00 V776.14 H1376.47 V831.00 Z M1376.47 831.00 V776.17 H1379.50 V831.00 Z" fill="#1a005a"/><path d="M571.21 831.00 V822.25 H574.57 V831.00 Z M574.57 831.00 V824.46 H577.92 V831.00 Z M577.92 831.00 V823.38 H581.28 V831.00 Z M581.28 831.00 V827.10 H584.63 V831.00 Z M584.63 831.00 V820.44 H587.99 V831.00 Z M587.99 831.00 V822.80 H591.34 V831.00 Z M591.34 831.00 V819.25 H594.70 V831.00 Z M594.70 831.00 V827.14 H598.05 V831.00 Z M598.05 831.00 V821.96 H601.41 V831.00 Z M601.41 831.00 V823.67 H604.76 V831.00 Z M604.76 831.00 V821.09 H608.12 V831.00 Z M608.12 831.00 V823.42 H611.47 V831.00 Z M611.47 831.00 V821.77 H614.83 V831.00 Z M614.83 831.00 V824.00 H618.18 V831.00 Z M618.18 831.00 V819.36 H621.54 V831.00 Z M621.54 831.00 V819.69 H624.89 V831.00 Z M624.89 831.00 V821.16 H628.25 V831.00 Z M628.25 831.00 V814.57 H631.61 V831.00 Z M631.61 831.00 V818.82 H634.96 V831.00 Z M634.96 831.00 V824.66 H638.32 V831.00 Z M638.32 831.00 V815.94 H641.67 V831.00 Z M641.67 831.00 V818.76 H645.03 V831.00 Z M645.03 831.00 V835.06 H648.38 V831.00 Z M648.38 831.00 V825.83 H651.74 V831.00 Z M651.74 831.00 V823.18 H655.09 V831.00 Z M655.09 831.00 V822.33 H658.45 V831.00 Z M658.45 831.00 V821.41 H661.80 V831.00 Z M661.80 831.00 V813.57 H665.16 V831.00 Z M665.16 831.00 V824.02 H668.51 V831.00 Z M668.51 831.00 V820.88 H671.87 V831.00 Z M671.87 831.00 V821.77 H675.22 V831.00 Z M675.22 831.00 V825.36 H678.58 V831.00 Z M678.58 831.00 V830.74 H681.93 V831.00 Z M681.93 831.00 V819.91 H685.29 V831.00 Z M685.29 831.00 V821.69 H688.64 V831.00 Z M688.64 831.00 V821.76 H692.00 V831.00 Z M692.00 831.00 V824.61 H695.35 V831.00 Z M695.35 831.00 V821.98 H698.71 V831.00 Z M698.71 831.00 V819.04 H702.07 V831.00 Z M702.07 831.00 V820.53 H705.42 V831.00 Z M705.42 831.00 V819.57 H708.78 V831.00 Z M708.78 831.00 V822.36 H712.13 V831.00 Z M712.13 831.00 V832.18 H715.49 V831.00 Z M715.49 831.00 V819.43 H718.84 V831.00 Z M718.84 831.00 V821.11 H722.20 V831.00 Z M722.20 831.00 V823.61 H725.55 V831.00 Z M725.55 831.00 V824.80 H728.91 V831.00 Z M728.91 831.00 V815.74 H732.26 V831.00 Z M732.26 831.00 V820.03 H735.62 V831.00 Z M735.62 831.00 V821.47 H738.97 V831.00 Z M738.97 831.00 V818.56 H742.33 V831.00 Z M742.33 831.00 V817.89 H745.68 V831.00 Z M745.68 831.00 V817.91 H749.04 V831.00 Z M749.04 831.00 V822.90 H752.39 V831.00 Z M752.39 831.00 V820.95 H755.75 V831.00 Z M755.75 831.00 V821.05 H759.10 V831.00 Z M759.10 831.00 V819.59 H762.46 V831.00 Z M762.46 831.00 V819.80 H765.81 V831.00 Z M765.81 831.00 V819.99 H769.17 V831.00 Z M769.17 831.00 V819.82 H772.52 V831.00 Z M772.52 831.00 V821.25 H775.88 V831.00 Z M775.88 831.00 V821.60 H779.24 V831.00 Z M779.24 831.00 V816.27 H782.59 V831.00 Z M782.59 831.00 V817.23 H785.95 V831.00 Z M785.95 831.00 V817.67 H789.30 V831.00 Z M789.30 831.00 V822.14 H792.66 V831.00 Z M792.66 831.00 V818.63 H796.01 V831.00 Z M796.01 831.00 V816.75 H799.37 V831.00 Z M799.37 831.00 V817.72 H802.72 V831.00 Z M802.72 831.00 V817.61 H806.08 V831.00 Z M806.08 831.00 V818.01 H809.43 V831.00 Z M809.43 831.00 V815.80 H812.79 V831.00 Z M812.79 831.00 V820.39 H816.14 V831.00 Z M816.14 831.00 V819.13 H819.50 V831.00 Z M819.50 831.00 V817.92 H822.85 V831.00 Z M822.85 831.00 V820.00 H826.21 V831.00 Z M826.21 831.00 V817.78 H829.56 V831.00 Z M829.56 831.00 V817.85 H832.92 V831.00 Z M832.92 831.00 V819.29 H836.27 V831.00 Z M836.27 831.00 V815.16 H839.63 V831.00 Z M839.63 831.00 V814.95 H842.98 V831.00 Z M842.98 831.00 V816.15 H846.34 V831.00 Z M846.34 831.00 V817.81 H849.70 V831.00 Z M849.70 831.00 V818.42 H853.05 V831.00 Z M853.05 831.00 V818.37 H856.41 V831.00 Z M856.41 831.00 V818.75 H859.76 V831.00 Z M859.76 831.00 V818.61 H863.12 V831.00 Z M863.12 831.00 V819.03 H866.47 V831.00 Z M866.47 831.00 V816.46 H869.83 V831.00 Z M869.83 831.00 V818.41 H873.18 V831.00 Z M873.18 831.00 V816.85 H876.54 V831.00 Z M876.54 831.00 V817.96 H879.89 V831.00 Z M879.89 831.00 V816.85 H883.25 V831.00 Z M883.25 831.00 V818.96 H886.60 V831.00 Z M886.60 831.00 V818.08 H889.96 V831.00 Z M889.96 831.00 V818.88 H893.31 V831.00 Z M893.31 831.00 V818.24 H896.67 V831.00 Z M896.67 831.00 V816.52 H900.02 V831.00 Z M900.02 831.00 V818.18 H903.38 V831.00 Z M903.38 831.00 V816.95 H906.73 V831.00 Z M906.73 831.00 V815.56 H910.09 V831.00 Z M910.09 831.00 V815.09 H913.44 V831.00 Z M913.44 831.00 V814.95 H916.80 V831.00 Z M916.80 831.00 V815.88 H920.16 V831.00 Z M920.16 831.00 V816.34 H923.51 V831.00 Z M923.51 831.00 V815.95 H926.87 V831.00 Z M926.87 831.00 V817.34 H930.22 V831.00 Z M930.22 831.00 V814.22 H933.58 V831.00 Z M933.58 831.00 V816.16 H936.93 V831.00 Z M936.93 831.00 V816.04 H940.29 V831.00 Z M940.29 831.00 V817.18 H943.64 V831.00 Z M943.64 831.00 V814.27 H947.00 V831.00 Z M947.00 831.00 V814.74 H950.35 V831.00 Z M950.35 831.00 V815.24 H953.71 V831.00 Z M953.71 831.00 V815.72 H957.06 V831.00 Z M957.06 831.00 V815.58 H960.42 V831.00 Z M960.42 831.00 V813.43 H963.77 V831.00 Z M963.77 831.00 V816.16 H967.13 V831.00 Z M967.13 831.00 V817.07 H970.48 V831.00 Z M970.48 831.00 V815.40 H973.84 V831.00 Z M973.84 831.00 V815.67 H977.19 V831.00 Z M977.19 831.00 V815.97 H980.55 V831.00 Z M980.55 831.00 V814.74 H983.90 V831.00 Z M983.90 831.00 V814.67 H987.26 V831.00 Z M987.26 831.00 V815.90 H990.61 V831.00 Z M990.61 831.00 V813.61 H993.97 V831.00 Z M993.97 831.00 V814.63 H997.33 V831.00 Z M997.33 831.00 V815.28 H1000.68 V831.00 Z M1000.68 831.00 V815.44 H1004.04 V831.00 Z M1004.04 831.00 V814.79 H1007.39 V831.00 Z M1007.39 831.00 V813.71 H1010.75 V831.00 Z M1010.75 831.00 V813.92 H1014.10 V831.00 Z M1014.10 831.00 V815.00 H1017.46 V831.00 Z M1017.46 831.00 V813.76 H1020.81 V831.00 Z M1020.81 831.00 V814.62 H1024.17 V831.00 Z M1024.17 831.00 V813.44 H1027.52 V831.00 Z M1027.52 831.00 V812.85 H1030.88 V831.00 Z M1030.88 831.00 V812.52 H1034.23 V831.00 Z M1034.23 831.00 V814.82 H1037.59 V831.00 Z M1037.59 831.00 V813.74 H1040.94 V831.00 Z M1040.94 831.00 V812.90 H1044.30 V831.00 Z M1044.30 831.00 V814.24 H1047.65 V831.00 Z M1047.65 831.00 V814.10 H1051.01 V831.00 Z M1051.01 831.00 V812.73 H1054.36 V831.00 Z M1054.36 831.00 V813.84 H1057.72 V831.00 Z M1057.72 831.00 V812.40 H1061.07 V831.00 Z M1061.07 831.00 V812.37 H1064.43 V831.00 Z M1064.43 831.00 V813.55 H1067.79 V831.00 Z M1067.79 831.00 V813.72 H1071.14 V831.00 Z M1071.14 831.00 V812.16 H1074.50 V831.00 Z M1074.50 831.00 V811.84 H1077.85 V831.00 Z M1077.85 831.00 V812.68 H1081.21 V831.00 Z M1081.21 831.00 V811.94 H1084.56 V831.00 Z M1084.56 831.00 V813.60 H1087.92 V831.00 Z M1087.92 831.00 V812.75 H1091.27 V831.00 Z M1091.27 831.00 V812.95 H1094.63 V831.00 Z M1094.63 831.00 V812.21 H1097.98 V831.00 Z M1097.98 831.00 V810.90 H1101.34 V831.00 Z M1101.34 831.00 V811.97 H1104.69 V831.00 Z M1104.69 831.00 V811.87 H1108.05 V831.00 Z M1108.05 831.00 V811.33 H1111.40 V831.00 Z M1111.40 831.00 V811.59 H1114.76 V831.00 Z M1114.76 831.00 V811.90 H1118.11 V831.00 Z M1118.11 831.00 V811.83 H1121.47 V831.00 Z M1121.47 831.00 V812.09 H1124.82 V831.00 Z M1124.82 831.00 V812.11 H1128.18 V831.00 Z M1128.18 831.00 V811.49 H1131.53 V831.00 Z M1131.53 831.00 V811.66 H1134.89 V831.00 Z M1134.89 831.00 V811.26 H1138.24 V831.00 Z M1138.24 831.00 V811.49 H1141.60 V831.00 Z M1141.60 831.00 V810.95 H1144.96 V831.00 Z M1144.96 831.00 V810.45 H1148.31 V831.00 Z M1148.31 831.00 V810.90 H1151.67 V831.00 Z M1151.67 831.00 V810.11 H1155.02 V831.00 Z M1155.02 831.00 V810.37 H1158.38 V831.00 Z M1158.38 831.00 V810.84 H1161.73 V831.00 Z M1161.73 831.00 V809.92 H1165.09 V831.00 Z M1165.09 831.00 V810.85 H1168.44 V831.00 Z M1168.44 831.00 V811.11 H1171.80 V831.00 Z M1171.80 831.00 V810.24 H1175.15 V831.00 Z M1175.15 831.00 V810.12 H1178.51 V831.00 Z M1178.51 831.00 V809.70 H1181.86 V831.00 Z M1181.86 831.00 V810.01 H1185.22 V831.00 Z M1185.22 831.00 V810.09 H1188.57 V831.00 Z M1188.57 831.00 V810.49 H1191.93 V831.00 Z M1191.93 831.00 V809.78 H1195.28 V831.00 Z M1195.28 831.00 V809.62 H1198.64 V831.00 Z M1198.64 831.00 V810.25 H1201.99 V831.00 Z M1201.99 831.00 V809.77 H1205.35 V831.00 Z M1205.35 831.00 V809.73 H1208.70 V831.00 Z M1208.70 831.00 V809.60 H1212.06 V831.00 Z M1212.06 831.00 V809.30 H1215.42 V831.00 Z M1215.42 831.00 V809.17 H1218.77 V831.00 Z M1218.77 831.00 V808.55 H1222.13 V831.00 Z M1222.13 831.00 V808.71 H1225.48 V831.00 Z M1225.48 831.00 V809.17 H1228.84 V831.00 Z M1228.84 831.00 V808.00 H1232.19 V831.00 Z M1232.19 831.00 V809.29 H1235.55 V831.00 Z M1235.55 831.00 V809.06 H1238.90 V831.00 Z M1238.90 831.00 V808.87 H1242.26 V831.00 Z M1242.26 831.00 V808.80 H1245.61 V831.00 Z M1245.61 831.00 V808.88 H1248.97 V831.00 Z M1248.97 831.00 V808.49 H1252.32 V831.00 Z M1252.32 831.00 V808.23 H1255.68 V831.00 Z M1255.68 831.00 V808.68 H1259.03 V831.00 Z M1259.03 831.00 V808.45 H1262.39 V831.00 Z M1262.39 831.00 V807.71 H1265.74 V831.00 Z M1265.74 831.00 V807.82 H1269.10 V831.00 Z M1269.10 831.00 V808.26 H1272.45 V831.00 Z M1272.45 831.00 V807.88 H1275.81 V831.00 Z M1275.81 831.00 V808.26 H1279.16 V831.00 Z M1279.16 831.00 V807.69 H1282.52 V831.00 Z M1282.52 831.00 V807.01 H1285.88 V831.00 Z M1285.88 831.00 V807.52 H1289.23 V831.00 Z M1289.23 831.00 V807.10 H1292.59 V831.00 Z M1292.59 831.00 V806.88 H1295.94 V831.00 Z M1295.94 831.00 V807.48 H1299.30 V831.00 Z M1299.30 831.00 V807.26 H1302.65 V831.00 Z M1302.65 831.00 V806.57 H1306.01 V831.00 Z M1306.01 831.00 V806.97 H1309.36 V831.00 Z M1309.36 831.00 V807.38 H1312.72 V831.00 Z M1312.72 831.00 V806.88 H1316.07 V831.00 Z M1316.07 831.00 V806.72 H1319.43 V831.00 Z M1319.43 831.00 V806.60 H1322.78 V831.00 Z M1322.78 831.00 V806.63 H1326.14 V831.00 Z M1326.14 831.00 V806.35 H1329.49 V831.00 Z M1329.49 831.00 V806.44 H1332.85 V831.00 Z M1332.85 831.00 V805.95 H1336.20 V831.00 Z M1336.20 831.00 V806.06 H1339.56 V831.00 Z M1339.56 831.00 V805.92 H1342.91 V831.00 Z M1342.91 831.00 V805.96 H1346.27 V831.00 Z M1346.27 831.00 V806.05 H1349.62 V831.00 Z M1349.62 831.00 V805.62 H1352.98 V831.00 Z M1352.98 831.00 V805.78 H1356.33 V831.00 Z M1356.33 831.00 V805.34 H1359.69 V831.00 Z M1359.69 831.00 V805.35 H1363.05 V831.00 Z M1363.05 831.00 V805.54 H1366.40 V831.00 Z M1366.40 831.00 V805.42 H1369.76 V831.00 Z M1369.76 831.00 V805.63 H1373.11 V831.00 Z M1373.11 831.00 V805.41 H1376.47 V831.00 Z M1376.47 831.00 V805.40 H1379.50 V831.00 Z" fill="#c4400d"/><path d="M571.21 822.55 H574.57 M574.57 824.76 H577.92 M577.92 823.68 H581.28 M581.28 827.40 H584.63 M584.63 820.74 H587.99 M587.99 823.10 H591.34 M591.34 819.55 H594.70 M594.70 827.44 H598.05 M598.05 822.26 H601.41 M601.41 823.97 H604.76 M604.76 821.39 H608.12 M608.12 823.72 H611.47 M611.47 822.07 H614.83 M614.83 824.30 H618.18 M618.18 819.66 H621.54 M621.54 819.99 H624.89 M624.89 821.46 H628.25 M628.25 814.87 H631.61 M631.61 819.12 H634.96 M634.96 824.96 H638.32 M638.32 816.24 H641.67 M641.67 819.06 H645.03 M645.03 835.36 H648.38 M648.38 826.13 H651.74 M651.74 823.48 H655.09 M655.09 822.63 H658.45 M658.45 821.71 H661.80 M661.80 813.87 H665.16 M665.16 824.32 H668.51 M668.51 821.18 H671.87 M671.87 822.07 H675.22 M675.22 825.66 H678.58 M678.58 831.04 H681.93 M681.93 820.21 H685.29 M685.29 821.99 H688.64 M688.64 822.06 H692.00 M692.00 824.91 H695.35 M695.35 822.28 H698.71 M698.71 819.34 H702.07 M702.07 820.83 H705.42 M705.42 819.87 H708.78 M708.78 822.66 H712.13 M712.13 832.48 H715.49 M715.49 819.73 H718.84 M718.84 821.41 H722.20 M722.20 823.91 H725.55 M725.55 825.10 H728.91 M728.91 816.04 H732.26 M732.26 820.33 H735.62 M735.62 821.77 H738.97 M738.97 818.86 H742.33 M742.33 818.19 H745.68 M745.68 818.21 H749.04 M749.04 823.20 H752.39 M752.39 821.25 H755.75 M755.75 821.35 H759.10 M759.10 819.89 H762.46 M762.46 820.10 H765.81 M765.81 820.29 H769.17 M769.17 820.12 H772.52 M772.52 821.55 H775.88 M775.88 821.90 H779.24 M779.24 816.57 H782.59 M782.59 817.53 H785.95 M785.95 817.97 H789.30 M789.30 822.44 H792.66 M792.66 818.93 H796.01 M796.01 817.05 H799.37 M799.37 818.02 H802.72 M802.72 817.91 H806.08 M806.08 818.31 H809.43 M809.43 816.10 H812.79 M812.79 820.69 H816.14 M816.14 819.43 H819.50 M819.50 818.22 H822.85 M822.85 820.30 H826.21 M826.21 818.08 H829.56 M829.56 818.15 H832.92 M832.92 819.59 H836.27 M836.27 815.46 H839.63 M839.63 815.25 H842.98 M842.98 816.45 H846.34 M846.34 818.11 H849.70 M849.70 818.72 H853.05 M853.05 818.67 H856.41 M856.41 819.05 H859.76 M859.76 818.91 H863.12 M863.12 819.33 H866.47 M866.47 816.76 H869.83 M869.83 818.71 H873.18 M873.18 817.15 H876.54 M876.54 818.26 H879.89 M879.89 817.15 H883.25 M883.25 819.26 H886.60 M886.60 818.38 H889.96 M889.96 819.18 H893.31 M893.31 818.54 H896.67 M896.67 816.82 H900.02 M900.02 818.48 H903.38 M903.38 817.25 H906.73 M906.73 815.86 H910.09 M910.09 815.39 H913.44 M913.44 815.25 H916.80 M916.80 816.18 H920.16 M920.16 816.64 H923.51 M923.51 816.25 H926.87 M926.87 817.64 H930.22 M930.22 814.52 H933.58 M933.58 816.46 H936.93 M936.93 816.34 H940.29 M940.29 817.48 H943.64 M943.64 814.57 H947.00 M947.00 815.04 H950.35 M950.35 815.54 H953.71 M953.71 816.02 H957.06 M957.06 815.88 H960.42 M960.42 813.73 H963.77 M963.77 816.46 H967.13 M967.13 817.37 H970.48 M970.48 815.70 H973.84 M973.84 815.97 H977.19 M977.19 816.27 H980.55 M980.55 815.04 H983.90 M983.90 814.97 H987.26 M987.26 816.20 H990.61 M990.61 813.91 H993.97 M993.97 814.93 H997.33 M997.33 815.58 H1000.68 M1000.68 815.74 H1004.04 M1004.04 815.09 H1007.39 M1007.39 814.01 H1010.75 M1010.75 814.22 H1014.10 M1014.10 815.30 H1017.46 M1017.46 814.06 H1020.81 M1020.81 814.92 H1024.17 M1024.17 813.74 H1027.52 M1027.52 813.15 H1030.88 M1030.88 812.82 H1034.23 M1034.23 815.12 H1037.59 M1037.59 814.04 H1040.94 M1040.94 813.20 H1044.30 M1044.30 814.54 H1047.65 M1047.65 814.40 H1051.01 M1051.01 813.03 H1054.36 M1054.36 814.14 H1057.72 M1057.72 812.70 H1061.07 M1061.07 812.67 H1064.43 M1064.43 813.85 H1067.79 M1067.79 814.02 H1071.14 M1071.14 812.46 H1074.50 M1074.50 812.14 H1077.85 M1077.85 812.98 H1081.21 M1081.21 812.24 H1084.56 M1084.56 813.90 H1087.92 M1087.92 813.05 H1091.27 M1091.27 813.25 H1094.63 M1094.63 812.51 H1097.98 M1097.98 811.20 H1101.34 M1101.34 812.27 H1104.69 M1104.69 812.17 H1108.05 M1108.05 811.63 H1111.40 M1111.40 811.89 H1114.76 M1114.76 812.20 H1118.11 M1118.11 812.13 H1121.47 M1121.47 812.39 H1124.82 M1124.82 812.41 H1128.18 M1128.18 811.79 H1131.53 M1131.53 811.96 H1134.89 M1134.89 811.56 H1138.24 M1138.24 811.79 H1141.60 M1141.60 811.25 H1144.96 M1144.96 810.75 H1148.31 M1148.31 811.20 H1151.67 M1151.67 810.41 H1155.02 M1155.02 810.67 H1158.38 M1158.38 811.14 H1161.73 M1161.73 810.22 H1165.09 M1165.09 811.15 H1168.44 M1168.44 811.41 H1171.80 M1171.80 810.54 H1175.15 M1175.15 810.42 H1178.51 M1178.51 810.00 H1181.86 M1181.86 810.31 H1185.22 M1185.22 810.39 H1188.57 M1188.57 810.79 H1191.93 M1191.93 810.08 H1195.28 M1195.28 809.92 H1198.64 M1198.64 810.55 H1201.99 M1201.99 810.07 H1205.35 M1205.35 810.03 H1208.70 M1208.70 809.90 H1212.06 M1212.06 809.60 H1215.42 M1215.42 809.47 H1218.77 M1218.77 808.85 H1222.13 M1222.13 809.01 H1225.48 M1225.48 809.47 H1228.84 M1228.84 808.30 H1232.19 M1232.19 809.59 H1235.55 M1235.55 809.36 H1238.90 M1238.90 809.17 H1242.26 M1242.26 809.10 H1245.61 M1245.61 809.18 H1248.97 M1248.97 808.79 H1252.32 M1252.32 808.53 H1255.68 M1255.68 808.98 H1259.03 M1259.03 808.75 H1262.39 M1262.39 808.01 H1265.74 M1265.74 808.12 H1269.10 M1269.10 808.56 H1272.45 M1272.45 808.18 H1275.81 M1275.81 808.56 H1279.16 M1279.16 807.99 H1282.52 M1282.52 807.31 H1285.88 M1285.88 807.82 H1289.23 M1289.23 807.40 H1292.59 M1292.59 807.18 H1295.94 M1295.94 807.78 H1299.30 M1299.30 807.56 H1302.65 M1302.65 806.87 H1306.01 M1306.01 807.27 H1309.36 M1309.36 807.68 H1312.72 M1312.72 807.18 H1316.07 M1316.07 807.02 H1319.43 M1319.43 806.90 H1322.78 M1322.78 806.93 H1326.14 M1326.14 806.65 H1329.49 M1329.49 806.74 H1332.85 M1332.85 806.25 H1336.20 M1336.20 806.36 H1339.56 M1339.56 806.22 H1342.91 M1342.91 806.26 H1346.27 M1346.27 806.35 H1349.62 M1349.62 805.92 H1352.98 M1352.98 806.08 H1356.33 M1356.33 805.64 H1359.69 M1359.69 805.65 H1363.05 M1363.05 805.84 H1366.40 M1366.40 805.72 H1369.76 M1369.76 805.93 H1373.11 M1373.11 805.71 H1376.47 M1376.47 805.70 H1379.50" stroke="#fff" stroke-opacity="0.45" stroke-width="0.6" fill="none"/><path d="M574.57 831.00 V786.99 M577.92 831.00 V786.89 M581.28 831.00 V784.92 M584.63 831.00 V784.92 M587.99 831.00 V786.60 M591.34 831.00 V784.63 M594.70 831.00 V784.63 M598.05 831.00 V786.30 M601.41 831.00 V786.21 M604.76 831.00 V786.11 M608.12 831.00 V786.01 M611.47 831.00 V784.04 M614.83 831.00 V784.04 M618.18 831.00 V785.72 M621.54 831.00 V783.74 M624.89 831.00 V783.74 M628.25 831.00 V785.42 M631.61 831.00 V785.32 M634.96 831.00 V785.22 M638.32 831.00 V785.13 M641.67 831.00 V785.03 M645.03 835.06 V784.93 M648.38 835.06 V782.38 M651.74 831.00 V782.38 M655.09 831.00 V782.19 M658.45 831.00 V782.19 M661.80 831.00 V784.44 M665.16 831.00 V781.89 M668.51 831.00 V781.89 M671.87 831.00 V784.14 M675.22 831.00 V781.60 M678.58 831.00 V781.60 M681.93 831.00 V783.85 M685.29 831.00 V783.75 M688.64 831.00 V781.78 M692.00 831.00 V781.78 M695.35 831.00 V783.46 M698.71 831.00 V781.49 M702.07 831.00 V781.49 M705.42 831.00 V783.16 M708.78 831.00 V783.06 M712.13 832.18 V782.97 M715.49 832.18 V782.87 M718.84 831.00 V780.90 M722.20 831.00 V780.90 M725.55 831.00 V782.57 M728.91 831.00 V782.47 M732.26 831.00 V782.38 M735.62 831.00 V782.28 M738.97 831.00 V782.18 M742.33 831.00 V780.21 M745.68 831.00 V780.21 M749.04 831.00 V781.89 M752.39 831.00 V781.79 M755.75 831.00 V781.69 M759.10 831.00 V781.59 M762.46 831.00 V781.46 M765.81 831.00 V781.33 M769.17 831.00 V781.19 M772.52 831.00 V781.05 M775.88 831.00 V780.91 M779.24 831.00 V780.77 M782.59 831.00 V780.64 M785.95 831.00 V780.50 M789.30 831.00 V780.36 M792.66 831.00 V780.22 M796.01 831.00 V780.08 M799.37 831.00 V779.95 M802.72 831.00 V779.81 M806.08 831.00 V779.67 M809.43 831.00 V779.53 M812.79 831.00 V779.39 M816.14 831.00 V779.26 M819.50 831.00 V779.12 M822.85 831.00 V778.98 M826.21 831.00 V778.84 M829.56 831.00 V778.70 M832.92 831.00 V778.57 M836.27 831.00 V778.43 M839.63 831.00 V778.29 M842.98 831.00 V778.12 M846.34 831.00 V777.94 M849.70 831.00 V777.76 M853.05 831.00 V777.58 M856.41 831.00 V777.40 M859.76 831.00 V777.22 M863.12 831.00 V777.04 M866.47 831.00 V776.86 M869.83 831.00 V776.68 M873.18 831.00 V776.50 M876.54 831.00 V776.32 M879.89 831.00 V776.14 M883.25 831.00 V775.96 M886.60 831.00 V775.78 M889.96 831.00 V775.60 M893.31 831.00 V775.42 M896.67 831.00 V775.24 M900.02 831.00 V775.06 M903.38 831.00 V774.88 M906.73 831.00 V774.70 M910.09 831.00 V774.52 M913.44 831.00 V774.34 M916.80 831.00 V774.16 M920.16 831.00 V773.98 M923.51 831.00 V773.76 M926.87 831.00 V773.51 M930.22 831.00 V773.27 M933.58 831.00 V773.03 M936.93 831.00 V772.79 M940.29 831.00 V772.54 M943.64 831.00 V772.30 M947.00 831.00 V772.06 M950.35 831.00 V771.73 M953.71 831.00 V771.41 M957.06 831.00 V771.08 M960.42 831.00 V770.76 M963.77 831.00 V770.31 M967.13 831.00 V769.86 M970.48 831.00 V769.41 M973.84 831.00 V768.96 M977.19 831.00 V768.46 M980.55 831.00 V767.96 M983.90 831.00 V767.45 M987.26 831.00 V766.94 M990.61 831.00 V766.17 M993.97 831.00 V765.40 M997.33 831.00 V764.63 M1000.68 831.00 V763.86 M1004.04 831.00 V762.27 M1007.39 831.00 V760.66 M1010.75 831.00 V759.06 M1014.10 831.00 V757.45 M1017.46 831.00 V755.64 M1020.81 831.00 V753.20 M1024.17 831.00 V748.30 M1027.52 831.00 V724.04 M1030.88 831.00 V724.04 M1034.23 831.00 V748.01 M1037.59 831.00 V752.91 M1040.94 831.00 V755.36 M1044.30 831.00 V757.46 M1047.65 831.00 V758.75 M1051.01 831.00 V760.04 M1054.36 831.00 V761.33 M1057.72 831.00 V762.63 M1061.07 831.00 V763.26 M1064.43 831.00 V763.89 M1067.79 831.00 V764.52 M1071.14 831.00 V765.15 M1074.50 831.00 V765.60 M1077.85 831.00 V766.05 M1081.21 831.00 V766.50 M1084.56 831.00 V766.95 M1087.92 831.00 V767.27 M1091.27 831.00 V767.60 M1094.63 831.00 V767.92 M1097.98 831.00 V768.24 M1101.34 831.00 V768.42 M1104.69 831.00 V768.60 M1108.05 831.00 V768.78 M1111.40 831.00 V768.96 M1114.76 831.00 V769.16 M1118.11 831.00 V769.36 M1121.47 831.00 V769.56 M1124.82 831.00 V769.76 M1128.18 831.00 V769.88 M1131.53 831.00 V770.01 M1134.89 831.00 V770.13 M1138.24 831.00 V770.26 M1141.60 831.00 V770.41 M1144.96 831.00 V770.56 M1148.31 831.00 V770.71 M1151.67 831.00 V770.86 M1155.02 831.00 V771.00 M1158.38 831.00 V771.15 M1161.73 831.00 V771.30 M1165.09 831.00 V771.45 M1168.44 831.00 V771.60 M1171.80 831.00 V771.75 M1175.15 831.00 V771.90 M1178.51 831.00 V772.05 M1181.86 831.00 V772.20 M1185.22 831.00 V772.35 M1188.57 831.00 V772.50 M1191.93 831.00 V772.64 M1195.28 831.00 V772.79 M1198.64 831.00 V772.94 M1201.99 831.00 V773.09 M1205.35 831.00 V773.24 M1208.70 831.00 V773.39 M1212.06 831.00 V773.54 M1215.42 831.00 V773.63 M1218.77 831.00 V773.70 M1222.13 831.00 V773.77 M1225.48 831.00 V773.84 M1228.84 831.00 V773.91 M1232.19 831.00 V773.98 M1235.55 831.00 V774.05 M1238.90 831.00 V774.12 M1242.26 831.00 V774.19 M1245.61 831.00 V774.26 M1248.97 831.00 V774.33 M1252.32 831.00 V774.40 M1255.68 831.00 V774.47 M1259.03 831.00 V774.54 M1262.39 831.00 V774.61 M1265.74 831.00 V774.69 M1269.10 831.00 V774.76 M1272.45 831.00 V774.83 M1275.81 831.00 V774.90 M1279.16 831.00 V774.97 M1282.52 831.00 V775.04 M1285.88 831.00 V775.11 M1289.23 831.00 V775.18 M1292.59 831.00 V775.25 M1295.94 831.00 V775.32 M1299.30 831.00 V775.38 M1302.65 831.00 V775.41 M1306.01 831.00 V775.45 M1309.36 831.00 V775.48 M1312.72 831.00 V775.51 M1316.07 831.00 V775.55 M1319.43 831.00 V775.58 M1322.78 831.00 V775.61 M1326.14 831.00 V775.65 M1329.49 831.00 V775.68 M1332.85 831.00 V775.71 M1336.20 831.00 V775.74 M1339.56 831.00 V775.78 M1342.91 831.00 V775.81 M1346.27 831.00 V775.84 M1349.62 831.00 V775.88 M1352.98 831.00 V775.91 M1356.33 831.00 V775.94 M1359.69 831.00 V775.98 M1363.05 831.00 V776.01 M1366.40 831.00 V776.04 M1369.76 831.00 V776.07 M1373.11 831.00 V776.11 M1376.47 831.00 V776.14" stroke="#fff" stroke-opacity="0.72" stroke-width="1.4" fill="none"/></g><path d="M573.25 723.10 L573.25 836.40" stroke="#777" stroke-width="1.1"/><path d="M573.25 836.40 L1379.50 836.40" stroke="#999" stroke-width="1.1"/><text x="569.30" y="747.60" font-size="8.1" fill="#555" text-anchor="end">-50.00</text><text x="569.30" y="783.60" font-size="8.1" fill="#555" text-anchor="end">-100.00</text><text x="569.30" y="819.60" font-size="8.1" fill="#555" text-anchor="end">-150.00</text><text x="761.70" y="846.50" font-size="8.1" fill="#555" text-anchor="middle">100.00</text><text x="1029.20" y="846.50" font-size="8.1" fill="#555" text-anchor="middle">1.00k</text><text x="1296.70" y="846.50" font-size="8.1" fill="#555" text-anchor="middle">10.00k</text><text x="971.80" y="860.40" font-size="9.2" fill="#555" text-anchor="middle">Frequency(Hz)</text><text x="0" y="0" font-size="9.2" fill="#555" text-anchor="middle" transform="translate(534.6 784.0) rotate(-90)">1/24 Octave(dBV)</text></svg>
<span class="t" style="left:7.20px;top:897.20px;height:13.2px;line-height:13.2px;font-size:9.4px;color:#666;">Measurement Time</span>
<div class="a " style="left:90.3px;top:897px;width:42px;height:13px;background:#1a005a;"></div>
<span class="t" style="left:93.01px;top:897.10px;height:13.2px;line-height:13.2px;font-size:9.4px;color:#fff;">00:00:00</span>
<span class="t" style="left:1628.71px;top:897.20px;height:13.2px;line-height:13.2px;font-size:9.4px;color:#666;white-space:pre;">Output  1 Ch</span>
<span class="t" style="left:1349.88px;top:897.20px;height:13.2px;line-height:13.2px;font-size:9.4px;color:#666;white-space:pre;">Input  0 Ch | High Pass  AC | Low Pass  Nyquist |   Z-Weighting</span>
</body></html>
